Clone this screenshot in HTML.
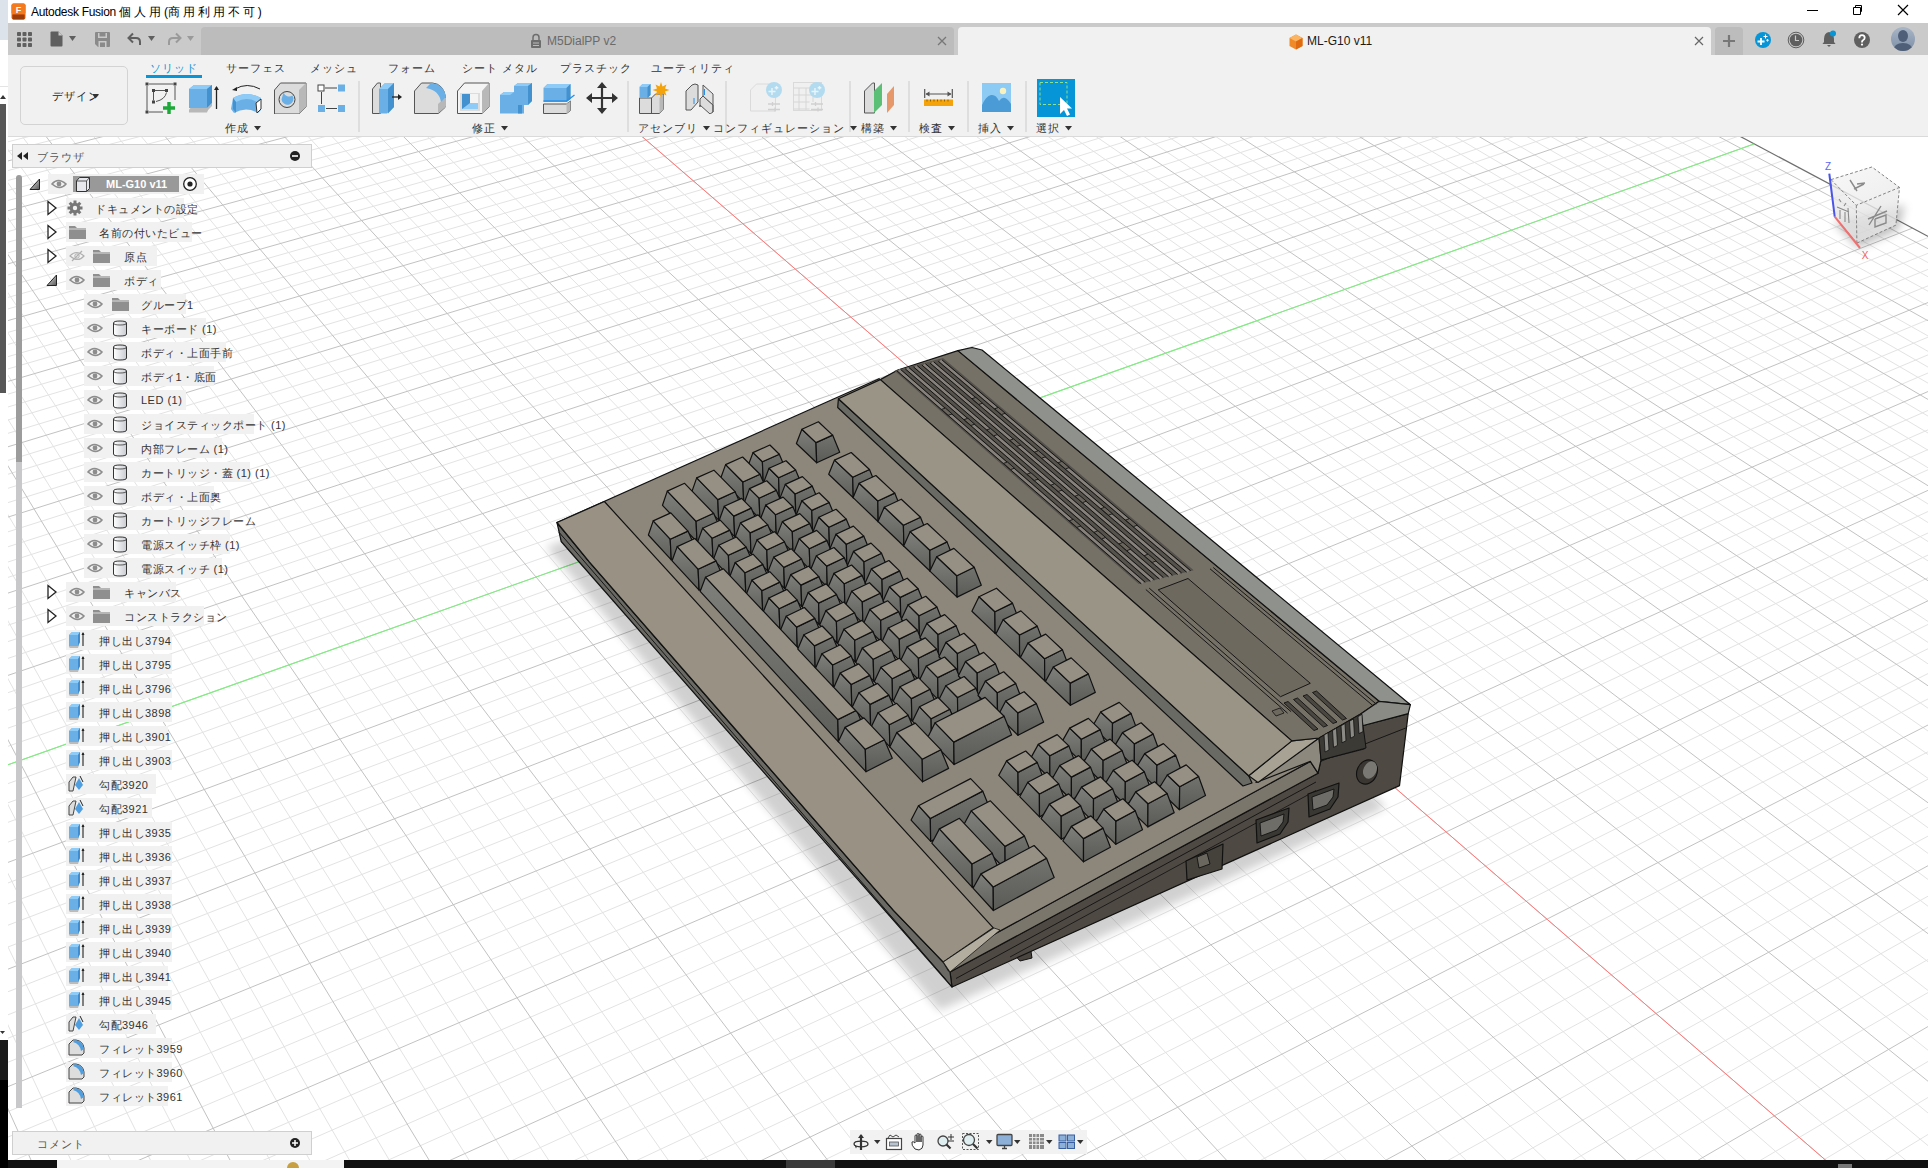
<!DOCTYPE html>
<html><head><meta charset="utf-8"><style>
html,body{margin:0;padding:0;width:1928px;height:1168px;overflow:hidden;background:#fff;position:relative}
</style></head><body>
<div style="position:absolute;left:8px;top:137px;width:1920px;height:1023px;background:#fff;overflow:hidden"><svg style="position:absolute;left:-8px;top:-137px" width="1928" height="1168" viewBox="0 0 1928 1168"><path d="M-1993.3 7708.7L3775.9 1219.5M-1966.8 7435.3L3732.6 1196.4M-1941.9 7178.0L3690.1 1173.8M-1918.4 6935.2L3648.4 1151.6M-1875.1 6488.8L3567.0 1108.3M-1855.2 6283.1L3527.3 1087.2M-1836.3 6087.8L3488.4 1066.5M-1818.3 5902.3L3450.0 1046.1M-1784.9 5557.6L3375.2 1006.3M-1769.4 5397.1L3338.8 986.9M-1754.6 5244.0L3302.9 967.8M-1740.4 5097.6L3267.6 949.0M-1713.8 4823.4L3198.6 912.3M-1701.4 4694.8L3164.9 894.4M-1689.4 4571.5L3131.8 876.8M-1677.9 4453.0L3099.1 859.4M-1656.3 4229.7L3035.3 825.5M-1646.1 4124.4L3004.1 808.9M-1636.3 4022.9L2973.4 792.5M-1626.8 3925.1L2943.1 776.4M-1608.9 3739.7L2883.9 744.9M-1600.3 3651.8L2855.0 729.5M-1592.1 3566.9L2826.4 714.4M-1584.2 3484.8L2798.3 699.4M-1569.0 3328.4L2743.2 670.1M-1561.8 3254.0L2716.3 655.7M-1554.8 3181.9L2689.7 641.6M-1548.0 3111.9L2663.5 627.6M-1535.1 2978.3L2612.1 600.3M-1528.9 2914.4L2586.9 586.9M-1522.9 2852.4L2562.1 573.7M-1517.1 2792.2L2537.6 560.7M-1505.9 2676.6L2489.6 535.1M-1500.5 2621.2L2466.0 522.6M-1495.3 2567.3L2442.8 510.3M-1490.2 2514.9L2419.9 498.1M-1480.4 2414.0L2374.9 474.1M-1475.7 2365.5L2352.8 462.4M-1471.2 2318.2L2331.0 450.8M-1466.7 2272.1L2309.5 439.3M-1458.1 2183.3L2267.3 416.9M-1454.0 2140.5L2246.5 405.8M-1449.9 2098.7L2226.0 394.9M-1445.9 2057.9L2205.8 384.2M-1438.3 1979.0L2166.1 363.0M-1434.6 1941.0L2146.6 352.6M-1431.0 1903.7L2127.3 342.4M-1427.5 1867.3L2108.2 332.2M-1420.7 1796.9L2070.8 312.3M-1417.4 1762.8L2052.4 302.5M-1414.1 1729.5L2034.2 292.9M-1411.0 1696.8L2016.2 283.3M-1404.8 1633.5L1980.8 264.5M-1401.9 1602.8L1963.5 255.2M-1399.0 1572.8L1946.3 246.1M-1396.1 1543.3L1929.3 237.1M-1390.6 1486.1L1895.9 219.3M-1387.9 1458.3L1879.4 210.5M-1385.2 1431.1L1863.2 201.9M-1382.6 1404.4L1847.1 193.3M-1377.6 1352.4L1815.4 176.5M-1375.2 1327.2L1799.9 168.2M-1372.8 1302.4L1784.5 160.0M-1370.4 1278.0L1769.2 151.9M-1365.8 1230.7L1739.2 135.9M-1363.6 1207.6L1724.4 128.1M-1361.4 1184.9L1709.8 120.3M-1359.2 1162.7L1695.3 112.6M-1355.0 1119.3L1666.8 97.4M-1353.0 1098.1L1652.8 89.9M-1351.0 1077.3L1638.9 82.6M-1349.0 1056.9L1625.1 75.2M-1345.1 1017.0L1598.0 60.8M-1343.2 997.6L1584.7 53.7M-1341.4 978.4L1571.4 46.7M-1339.6 959.6L1558.4 39.7M-1336.0 922.8L1532.5 26.0M-1334.3 904.8L1519.8 19.2M-1332.5 887.1L1507.2 12.5M-1330.9 869.7L1494.8 5.9M-1327.6 835.7L1470.2 -7.2M-1326.0 819.0L1458.0 -13.7M-1324.4 802.6L1446.0 -20.0M-1322.8 786.5L1434.1 -26.4M-1319.7 754.9L1410.7 -38.9M-1318.2 739.5L1399.1 -45.0M-1316.8 724.2L1387.6 -51.1M-1315.3 709.2L1376.2 -57.2M-1312.5 679.8L1353.8 -69.1M-1311.1 665.4L1342.8 -75.0M-1309.7 651.2L1331.8 -80.8M-1308.3 637.3L1320.9 -86.6M-1305.7 609.8L1299.5 -98.0M-1304.4 596.4L1288.9 -103.6M-1303.1 583.2L1278.4 -109.2M-1301.8 570.1L1268.0 -114.7M-1299.4 544.4L1247.5 -125.7M-1298.1 531.9L1237.4 -131.0M-1296.9 519.5L1227.3 -136.4M-1295.8 507.2L1217.4 -141.7M-1293.4 483.2L1197.7 -152.1M-1292.3 471.4L1188.0 -157.3M-1291.2 459.8L1178.4 -162.4M-1290.0 448.3L1168.8 -167.5M-1287.9 425.8L1150.0 -177.5M-1286.8 414.7L1140.7 -182.5M-1285.7 403.8L1131.4 -187.4M-1284.7 393.0L1122.3 -192.3M-1282.6 371.7L1104.2 -201.9M-1281.6 361.3L1095.3 -206.7M-1280.6 351.0L1086.4 -211.4M-1279.6 340.8L1077.6 -216.1M-1277.7 320.9L1060.2 -225.3M-1276.7 311.0L1051.6 -229.9M-1275.8 301.3L1043.1 -234.4M-1274.9 291.7L1034.6 -238.9M-1273.0 272.8L1017.9 -247.8M-1272.1 263.6L1009.7 -252.2M-1271.3 254.4L1001.5 -256.5M-1270.4 245.3L993.4 -260.9M-1268.6 227.5L977.3 -269.4M-1267.8 218.7L969.3 -273.7M-1267.0 210.0L961.4 -277.8M-1266.1 201.4L953.6 -282.0M-1264.5 184.5L938.1 -290.2M-1263.7 176.2L930.5 -294.3M-1262.9 167.9L922.9 -298.4M-1262.1 159.8L915.4 -302.4M-1859.9 7812.7L-1237.0 146.6M-1704.7 7633.1L-1212.8 141.5M-1555.4 7460.4L-1188.8 136.4M-1411.7 7294.2L-1164.9 131.4M-1139.9 6979.8L-1117.7 121.4M-1011.2 6830.9L-1094.3 116.5M-887.0 6687.3L-1071.0 111.6M-767.1 6548.6L-1047.9 106.7M-539.2 6284.9L-1002.2 97.0M-430.8 6159.6L-979.5 92.2M-325.9 6038.2L-957.0 87.5M-224.3 5920.7L-934.7 82.8M-30.4 5696.5L-890.3 73.4M62.2 5589.4L-868.4 68.8M152.0 5485.5L-846.6 64.2M239.1 5384.7L-824.9 59.6M406.0 5191.6L-781.9 50.5M486.0 5099.2L-760.7 46.0M563.7 5009.3L-739.5 41.6M639.3 4921.8L-718.5 37.1M784.5 4753.8L-676.9 28.3M854.3 4673.2L-656.2 24.0M922.2 4594.6L-635.7 19.6M988.4 4518.0L-615.3 15.3M1115.9 4370.5L-574.9 6.8M1177.3 4299.5L-554.9 2.6M1237.2 4230.2L-535.0 -1.6M1295.7 4162.6L-515.2 -5.8M1408.5 4032.1L-476.0 -14.1M1462.9 3969.2L-456.6 -18.2M1516.1 3907.6L-437.3 -22.3M1568.1 3847.5L-418.1 -26.3M1668.6 3731.2L-380.0 -34.4M1717.3 3675.0L-361.1 -38.4M1764.8 3620.0L-342.4 -42.3M1811.4 3566.1L-323.7 -46.3M1901.5 3461.8L-286.7 -54.1M1945.2 3411.3L-268.4 -57.9M1988.0 3361.8L-250.2 -61.8M2029.9 3313.4L-232.0 -65.6M2111.2 3219.3L-196.1 -73.2M2150.6 3173.7L-178.3 -77.0M2189.3 3129.0L-160.6 -80.7M2227.2 3085.1L-142.9 -84.4M2300.9 2999.8L-108.0 -91.8M2336.8 2958.4L-90.7 -95.5M2371.9 2917.8L-73.5 -99.1M2406.4 2877.9L-56.3 -102.7M2473.5 2800.2L-22.3 -109.9M2506.2 2762.5L-5.5 -113.5M2538.2 2725.4L11.3 -117.0M2569.7 2688.9L27.9 -120.5M2631.1 2617.9L61.0 -127.5M2661.0 2583.4L77.4 -131.0M2690.4 2549.4L93.7 -134.4M2719.3 2516.0L109.9 -137.8M2775.6 2450.8L142.1 -144.6M2803.1 2419.0L158.0 -148.0M2830.1 2387.8L173.9 -151.4M2856.7 2357.0L189.7 -154.7M2908.6 2297.0L221.0 -161.3M2933.9 2267.7L236.6 -164.6M2958.9 2238.8L252.0 -167.9M2983.4 2210.5L267.4 -171.1M3031.4 2155.0L297.9 -177.5M3054.8 2127.9L313.1 -180.7M3077.9 2101.2L328.1 -183.9M3100.6 2074.9L343.1 -187.1M3145.1 2023.5L372.8 -193.4M3166.8 1998.3L387.6 -196.5M3188.2 1973.5L402.3 -199.6M3209.3 1949.1L416.9 -202.7M3250.7 1901.3L445.8 -208.8M3270.9 1877.9L460.2 -211.8M3290.8 1854.9L474.5 -214.8M3310.5 1832.1L488.8 -217.8M3349.0 1787.6L517.0 -223.8M3367.8 1765.8L531.0 -226.8M3386.5 1744.2L545.0 -229.7M3404.8 1723.0L558.9 -232.6M3440.8 1681.4L586.4 -238.5M3458.4 1661.0L600.1 -241.4M3475.8 1640.9L613.7 -244.2M3493.0 1621.0L627.2 -247.1M3526.7 1582.1L654.1 -252.8M3543.2 1563.0L667.5 -255.6M3559.5 1544.1L680.7 -258.4M3575.6 1525.5L693.9 -261.2M3607.2 1488.9L720.2 -266.7M3622.7 1471.0L733.2 -269.5M3638.0 1453.3L746.1 -272.2M3653.1 1435.8L759.0 -274.9M3682.8 1401.4L784.7 -280.3M3697.4 1384.5L797.4 -283.0M3711.8 1367.9L810.0 -285.7M3726.1 1351.4L822.6 -288.3M3754.1 1319.0L847.6 -293.6M3767.8 1303.1L860.0 -296.2M3781.4 1287.4L872.4 -298.9M3794.8 1271.9L884.7 -301.5" stroke="#e3e3e3" stroke-width="1" fill="none"/>
<path d="M-2021.5 7999.5L3819.9 1242.9M-1896.2 6705.8L3607.3 1129.8M-1801.2 5725.7L3412.3 1026.0M-1726.8 4957.5L3232.8 930.5M-1666.9 4339.2L3067.0 842.3M-1617.7 3830.8L2913.3 760.6M-1576.5 3405.3L2770.6 684.6M-1541.5 3044.1L2637.6 613.9M-1511.4 2733.6L2513.4 547.8M-1485.3 2463.8L2397.2 486.0M-1462.3 2227.2L2288.2 428.0M-1442.1 2018.0L2185.8 373.5M-1424.0 1831.7L2089.4 322.2M-1407.9 1664.8L1998.4 273.8M-1393.3 1514.4L1912.5 228.1M-1380.1 1378.2L1831.2 184.9M-1368.1 1254.1L1754.1 143.9M-1357.1 1140.8L1681.0 105.0M-1347.0 1036.8L1611.5 68.0M-1337.8 941.0L1545.4 32.8M-1329.2 852.6L1482.4 -0.7M-1321.3 770.6L1422.3 -32.7M-1313.9 694.4L1365.0 -63.2M-1307.0 623.5L1310.2 -92.3M-1300.6 557.2L1257.7 -120.2M-1294.6 495.2L1207.5 -146.9M-1288.9 437.0L1159.4 -172.5M-1283.6 382.3L1113.2 -197.1M-1278.7 330.8L1068.9 -220.7M-1274.0 282.2L1026.3 -243.4M-1269.5 236.3L985.3 -265.2M-1265.3 192.9L945.9 -286.1M-1261.3 151.7L907.9 -306.4M-2021.5 7999.5L-1261.3 151.7M-1273.3 7134.1L-1141.2 126.4M-651.2 6414.5L-1025.0 101.8M-125.8 5806.8L-912.4 78.1M323.8 5286.8L-803.4 55.0M712.9 4836.7L-697.6 32.7M1053.0 4443.3L-595.1 11.0M1352.7 4096.6L-495.6 -10.0M1618.9 3788.7L-399.0 -30.4M1856.9 3513.4L-305.2 -50.2M2070.9 3265.9L-214.0 -69.4M2264.4 3042.0L-125.4 -88.1M2440.3 2838.7L-39.3 -106.3M2600.7 2653.1L44.5 -124.0M2747.7 2483.1L126.0 -141.2M2882.8 2326.8L205.4 -158.0M3007.6 2182.5L282.7 -174.3M3123.0 2049.0L358.0 -190.2M3230.1 1925.0L431.4 -205.7M3329.9 1809.7L502.9 -220.8M3422.9 1702.1L572.7 -235.6M3509.9 1601.4L640.7 -249.9M3591.5 1507.1L707.1 -263.9M3668.1 1418.5L771.9 -277.6M3740.2 1335.1L835.1 -291.0M3808.1 1256.5L896.9 -304.0" stroke="#c2c2c2" stroke-width="1" fill="none"/>
<path d="M3819.9 1242.9L907.9 -306.4" stroke="#6e6e6e" stroke-width="1.2" fill="none"/>
<path d="M3007.6 2182.5L282.7 -174.3" stroke="#ff7a7a" stroke-width="1" fill="none"/>
<path d="M-1368.1 1254.1L1754.1 143.9" stroke="#7cf07c" stroke-width="1.1" fill="none"/>
<defs><filter id="kbshadow" x="-20%" y="-20%" width="140%" height="140%"><feGaussianBlur stdDeviation="5"/></filter><linearGradient id="gkf" x1="0" y1="0" x2="0" y2="1"><stop offset="0" stop-color="#7f807c"/><stop offset="1" stop-color="#5e5f5b"/></linearGradient><linearGradient id="gkr" x1="0" y1="0" x2="0" y2="1"><stop offset="0" stop-color="#72736f"/><stop offset="1" stop-color="#5a5b57"/></linearGradient></defs>
<polygon points="546.2,546.8 939.6,1010.6 1385.7,807.2 961.6,404.9" fill="#000" opacity="0.18" filter="url(#kbshadow)"/>
<polygon points="1012.0,952.0 1030.0,945.0 1032.0,958.0 1020.0,961.0" fill="#4a463f" stroke="#111" stroke-width="1" stroke-linejoin="round"/>
<polygon points="952.0,987.0 950.0,972.0 1318.0,773.2 1321.0,760.0 1364.0,749.0 1361.4,726.0 1408.2,713.6 1399.5,785.6" fill="#4e4a43" stroke="#111" stroke-width="1.2" stroke-linejoin="round"/>
<line x1="956.0" y1="978.5" x2="1316.0" y2="782.0" stroke="#161616" stroke-width="1.0"/>
<line x1="1010.0" y1="957.0" x2="1316.0" y2="790.5" stroke="#161616" stroke-width="0.9"/>
<line x1="1319.0" y1="762.0" x2="1405.8" y2="728.0" stroke="#161616" stroke-width="1.0"/>
<polygon points="943.3,962.0 1310.3,761.4 1318.0,773.2 950.0,972.0" fill="#7b766c" stroke="#111" stroke-width="1.2" stroke-linejoin="round"/>
<ellipse cx="1367" cy="772" rx="10" ry="12.5" transform="rotate(25 1367 772)" fill="#3a3732" stroke="#111" stroke-width="1.1"/>
<ellipse cx="1370" cy="770" rx="6.5" ry="9" transform="rotate(25 1370 770)" fill="#7a7872"/>
<polygon points="1308.0,794.0 1339.0,783.0 1338.0,797.0 1330.0,809.0 1309.0,817.0" fill="#3a3833" stroke="#111" stroke-width="1.2" stroke-linejoin="round"/>
<polygon points="1312.0,797.0 1334.0,789.0 1333.0,797.0 1327.0,805.0 1313.0,810.0" fill="#6f6d67" stroke="#111" stroke-width="0.9" stroke-linejoin="round"/>
<polygon points="1256.0,820.0 1289.0,808.0 1288.0,822.0 1280.0,834.0 1257.0,843.0" fill="#3a3833" stroke="#111" stroke-width="1.2" stroke-linejoin="round"/>
<polygon points="1260.0,823.0 1284.0,814.0 1283.0,822.0 1277.0,830.0 1261.0,836.0" fill="#6f6d67" stroke="#111" stroke-width="0.9" stroke-linejoin="round"/>
<polygon points="1186.0,861.0 1223.0,844.0 1222.0,869.0 1187.0,880.0" fill="#45423c" stroke="#111" stroke-width="1.2" stroke-linejoin="round"/>
<polygon points="1197.0,857.0 1207.0,853.0 1210.0,864.0 1199.0,868.0" fill="#6a675f" stroke="#111" stroke-width="0.9" stroke-linejoin="round"/>
<polygon points="561.2,541.5 952.0,987.0 950.0,972.0 948.0,970.0 943.3,962.1 893.5,910.3 589.1,561.7 557.0,522.5" fill="#6a6963" stroke="#111" stroke-width="1.2" stroke-linejoin="round"/>
<line x1="558.9" y1="532.1" x2="945.9" y2="979.5" stroke="#161616" stroke-width="1.0"/>
<polygon points="557.0,522.5 589.1,561.7 893.5,910.3 943.3,962.1 1311.5,760.8 879.0,378.7" fill="#8c867b" stroke="#111" stroke-width="1.2" stroke-linejoin="round"/>
<polygon points="557.0,522.5 589.1,561.7 893.5,910.3 943.3,962.1 993.3,927.8 604.4,501.5" fill="#989184" stroke="#111" stroke-width="1.2" stroke-linejoin="round"/>
<polygon points="943.3,962.0 994.0,928.0 1000.0,930.0 950.0,972.0" fill="#b3ad9f" stroke="#161616" stroke-width="0.8" stroke-linejoin="round"/>
<polygon points="1256.0,782.5 1319.0,738.0 1321.0,760.0 1318.0,773.2 1310.3,761.4" fill="#8d887d" stroke="#111" stroke-width="1.2" stroke-linejoin="round"/>
<polygon points="837.7,407.5 838.4,398.8 1248.7,775.8 1252.0,783.0 1243.0,786.0" fill="#6a6a65" stroke="#111" stroke-width="1.2" stroke-linejoin="round"/>
<polygon points="1248.7,775.8 1291.8,740.9 1319.0,738.0 1258.0,782.5" fill="#a8a294" stroke="#111" stroke-width="1.2" stroke-linejoin="round"/>
<polygon points="880.3,379.6 897.8,370.0 957.9,350.6 1379.2,701.3 1361.4,713.6 1319.0,738.0 1291.8,740.9" fill="#767166" stroke="#111" stroke-width="1.2" stroke-linejoin="round"/>
<polygon points="838.4,398.8 880.3,379.6 1291.8,740.9 1248.7,775.8" fill="#9a9487" stroke="#111" stroke-width="1.2" stroke-linejoin="round"/>
<polygon points="957.9,350.6 972.0,347.5 982.0,350.0 1410.4,704.7 1379.2,701.3" fill="#8f928c" stroke="#111" stroke-width="1.2" stroke-linejoin="round"/>
<polygon points="1379.2,701.3 1410.4,704.7 1408.2,713.6 1361.4,726.0 1361.4,713.6" fill="#8a8b85" stroke="#111" stroke-width="1.2" stroke-linejoin="round"/>
<polygon points="1319.0,738.0 1361.4,713.6 1366.0,748.0 1321.0,760.0" fill="#3c3a35" stroke="#111" stroke-width="1.0" stroke-linejoin="round"/>
<polygon points="1324.0,735.0 1328.0,732.7 1329.0,750.0 1325.0,752.0" fill="#8b8a84" stroke="#111" stroke-width="0.8" stroke-linejoin="round"/>
<polygon points="1332.5,730.4 1336.5,728.1 1337.5,745.4 1333.5,747.4" fill="#8b8a84" stroke="#111" stroke-width="0.8" stroke-linejoin="round"/>
<polygon points="1341.0,725.8 1345.0,723.5 1346.0,740.8 1342.0,742.8" fill="#8b8a84" stroke="#111" stroke-width="0.8" stroke-linejoin="round"/>
<polygon points="1349.5,721.2 1353.5,718.9 1354.5,736.2 1350.5,738.2" fill="#8b8a84" stroke="#111" stroke-width="0.8" stroke-linejoin="round"/>
<polygon points="1358.0,716.6 1362.0,714.3 1363.0,731.6 1359.0,733.6" fill="#8b8a84" stroke="#111" stroke-width="0.8" stroke-linejoin="round"/>
<polygon points="894.5,370.8 1138.8,584.1 1193.7,570.2 943.0,358.1" fill="#55524c"/>
<line x1="898.8" y1="370.1" x2="1143.2" y2="583.0" stroke="#86817a" stroke-width="2.6"/>
<line x1="896.9" y1="370.8" x2="1141.2" y2="583.8" stroke="#141414" stroke-width="1.0"/>
<line x1="900.7" y1="369.5" x2="1145.2" y2="582.2" stroke="#141414" stroke-width="1.0"/>
<line x1="907.1" y1="368.2" x2="1152.3" y2="580.6" stroke="#86817a" stroke-width="2.6"/>
<line x1="905.2" y1="368.8" x2="1150.3" y2="581.4" stroke="#141414" stroke-width="1.0"/>
<line x1="909.0" y1="367.6" x2="1154.4" y2="579.8" stroke="#141414" stroke-width="1.0"/>
<line x1="915.4" y1="366.3" x2="1161.4" y2="578.3" stroke="#86817a" stroke-width="2.6"/>
<line x1="913.5" y1="366.9" x2="1159.4" y2="579.1" stroke="#141414" stroke-width="1.0"/>
<line x1="917.3" y1="365.7" x2="1163.4" y2="577.5" stroke="#141414" stroke-width="1.0"/>
<line x1="923.7" y1="364.4" x2="1170.5" y2="576.0" stroke="#86817a" stroke-width="2.6"/>
<line x1="921.8" y1="365.0" x2="1168.5" y2="576.8" stroke="#141414" stroke-width="1.0"/>
<line x1="925.5" y1="363.8" x2="1172.5" y2="575.2" stroke="#141414" stroke-width="1.0"/>
<line x1="931.9" y1="362.5" x2="1179.6" y2="573.7" stroke="#86817a" stroke-width="2.6"/>
<line x1="930.1" y1="363.2" x2="1177.6" y2="574.5" stroke="#141414" stroke-width="1.0"/>
<line x1="933.8" y1="361.9" x2="1181.6" y2="572.9" stroke="#141414" stroke-width="1.0"/>
<line x1="940.2" y1="360.6" x2="1188.6" y2="571.4" stroke="#86817a" stroke-width="2.6"/>
<line x1="938.3" y1="361.3" x2="1186.6" y2="572.2" stroke="#141414" stroke-width="1.0"/>
<line x1="942.1" y1="360.0" x2="1190.6" y2="570.6" stroke="#141414" stroke-width="1.0"/>
<polygon points="941.5,409.4 948.2,415.3 952.1,413.9 945.4,408.1" fill="#6a665e" stroke="#161616" stroke-width="0.9" stroke-linejoin="round"/>
<polygon points="1003.5,463.4 1010.6,469.6 1014.5,468.2 1007.4,462.0" fill="#6a665e" stroke="#161616" stroke-width="0.9" stroke-linejoin="round"/>
<polygon points="1069.3,520.8 1076.9,527.4 1080.8,525.9 1073.3,519.3" fill="#6a665e" stroke="#161616" stroke-width="0.9" stroke-linejoin="round"/>
<polygon points="964.0,419.6 970.9,425.5 974.7,424.2 967.9,418.3" fill="#6a665e" stroke="#161616" stroke-width="0.9" stroke-linejoin="round"/>
<polygon points="1027.0,474.2 1034.3,480.5 1038.2,479.1 1030.9,472.8" fill="#6a665e" stroke="#161616" stroke-width="0.9" stroke-linejoin="round"/>
<polygon points="1094.0,532.3 1101.7,539.0 1105.6,537.4 1097.9,530.8" fill="#6a665e" stroke="#161616" stroke-width="0.9" stroke-linejoin="round"/>
<polygon points="986.8,429.9 993.7,435.9 997.6,434.5 990.6,428.5" fill="#6a665e" stroke="#161616" stroke-width="0.9" stroke-linejoin="round"/>
<polygon points="1050.8,485.2 1058.2,491.5 1062.1,490.1 1054.8,483.7" fill="#6a665e" stroke="#161616" stroke-width="0.9" stroke-linejoin="round"/>
<polygon points="1118.9,543.9 1126.8,550.7 1130.8,549.1 1122.9,542.4" fill="#6a665e" stroke="#161616" stroke-width="0.9" stroke-linejoin="round"/>
<polygon points="1009.8,440.3 1016.8,446.4 1020.7,445.0 1013.6,438.9" fill="#6a665e" stroke="#161616" stroke-width="0.9" stroke-linejoin="round"/>
<polygon points="1075.0,496.2 1082.4,502.7 1086.4,501.2 1078.9,494.8" fill="#6a665e" stroke="#161616" stroke-width="0.9" stroke-linejoin="round"/>
<polygon points="1144.2,555.7 1152.2,562.5 1156.2,560.9 1148.2,554.1" fill="#6a665e" stroke="#161616" stroke-width="0.9" stroke-linejoin="round"/>
<polygon points="972.0,398.7 978.8,404.5 982.6,403.2 975.8,397.4" fill="#6a665e" stroke="#161616" stroke-width="0.9" stroke-linejoin="round"/>
<polygon points="1034.5,452.1 1041.7,458.2 1045.5,456.8 1038.4,450.7" fill="#6a665e" stroke="#161616" stroke-width="0.9" stroke-linejoin="round"/>
<polygon points="1100.9,508.7 1108.5,515.2 1112.4,513.7 1104.8,507.2" fill="#6a665e" stroke="#161616" stroke-width="0.9" stroke-linejoin="round"/>
<polygon points="994.6,408.8 1001.4,414.6 1005.2,413.3 998.4,407.4" fill="#6a665e" stroke="#161616" stroke-width="0.9" stroke-linejoin="round"/>
<polygon points="1058.1,462.8 1065.4,469.0 1069.3,467.5 1061.9,461.3" fill="#6a665e" stroke="#161616" stroke-width="0.9" stroke-linejoin="round"/>
<polygon points="1125.6,520.1 1133.3,526.7 1137.3,525.1 1129.5,518.6" fill="#6a665e" stroke="#161616" stroke-width="0.9" stroke-linejoin="round"/>
<line x1="1145.8" y1="589.5" x2="1287.6" y2="713.2" stroke="#161616" stroke-width="1.0"/>
<line x1="1149.2" y1="588.1" x2="1291.1" y2="711.7" stroke="#161616" stroke-width="1.0"/>
<line x1="1210.0" y1="568.8" x2="1372.9" y2="705.6" stroke="#161616" stroke-width="1.0"/>
<line x1="1213.2" y1="567.5" x2="1376.3" y2="704.1" stroke="#161616" stroke-width="1.0"/>
<polygon points="1158.2,589.8 1188.0,578.5 1310.3,683.3 1280.5,696.7" fill="#6e695f" stroke="#161616" stroke-width="1.0" stroke-linejoin="round"/>
<polygon points="1284.0,703.0 1288.0,701.5 1318.0,729.0 1314.0,730.5" fill="#4a4741" stroke="#111" stroke-width="0.9" stroke-linejoin="round"/>
<polygon points="1293.5,699.5 1297.5,698.0 1327.5,725.5 1323.5,727.0" fill="#4a4741" stroke="#111" stroke-width="0.9" stroke-linejoin="round"/>
<polygon points="1303.0,696.0 1307.0,694.5 1337.0,722.0 1333.0,723.5" fill="#4a4741" stroke="#111" stroke-width="0.9" stroke-linejoin="round"/>
<polygon points="1312.5,692.5 1316.5,691.0 1346.5,718.5 1342.5,720.0" fill="#4a4741" stroke="#111" stroke-width="0.9" stroke-linejoin="round"/>
<polygon points="1272.0,711.0 1280.0,708.0 1284.0,713.0 1276.0,716.0" fill="#6e695f" stroke="#111" stroke-width="0.8" stroke-linejoin="round"/>
<polygon points="796.4,443.5 816.7,462.8 816.0,442.6 801.9,429.3" fill="url(#gkf)" stroke="#111" stroke-width="1.2" stroke-linejoin="round"/><polygon points="816.7,462.8 839.7,452.3 832.6,435.1 816.0,442.6" fill="url(#gkr)" stroke="#111" stroke-width="1.2" stroke-linejoin="round"/><polygon points="801.9,429.3 816.0,442.6 832.6,435.1 818.4,421.8" fill="#958f84" stroke="#111" stroke-width="1.2" stroke-linejoin="round"/>
<polygon points="747.7,466.8 763.2,482.1 762.4,461.8 753.0,452.6" fill="url(#gkf)" stroke="#111" stroke-width="1.2" stroke-linejoin="round"/><polygon points="763.2,482.1 786.6,471.4 779.3,454.2 762.4,461.8" fill="url(#gkr)" stroke="#111" stroke-width="1.2" stroke-linejoin="round"/><polygon points="753.0,452.6 762.4,461.8 779.3,454.2 769.9,445.0" fill="#958f84" stroke="#111" stroke-width="1.2" stroke-linejoin="round"/>
<polygon points="720.5,478.8 743.7,502.4 742.9,482.0 725.6,464.6" fill="url(#gkf)" stroke="#111" stroke-width="1.2" stroke-linejoin="round"/><polygon points="743.7,502.4 767.5,491.6 760.0,474.2 742.9,482.0" fill="url(#gkr)" stroke="#111" stroke-width="1.2" stroke-linejoin="round"/><polygon points="725.6,464.6 742.9,482.0 760.0,474.2 742.6,457.0" fill="#958f84" stroke="#111" stroke-width="1.2" stroke-linejoin="round"/>
<polygon points="763.6,482.6 779.3,498.2 778.6,477.8 769.0,468.3" fill="url(#gkf)" stroke="#111" stroke-width="1.2" stroke-linejoin="round"/><polygon points="779.3,498.2 802.9,487.3 795.6,470.0 778.6,477.8" fill="url(#gkr)" stroke="#111" stroke-width="1.2" stroke-linejoin="round"/><polygon points="769.0,468.3 778.6,477.8 795.6,470.0 786.0,460.7" fill="#958f84" stroke="#111" stroke-width="1.2" stroke-linejoin="round"/>
<polygon points="691.7,492.1 718.7,520.1 717.8,499.6 696.7,477.9" fill="url(#gkf)" stroke="#111" stroke-width="1.2" stroke-linejoin="round"/><polygon points="718.7,520.1 742.7,509.1 735.1,491.7 717.8,499.6" fill="url(#gkr)" stroke="#111" stroke-width="1.2" stroke-linejoin="round"/><polygon points="696.7,477.9 717.8,499.6 735.1,491.7 713.9,470.2" fill="#958f84" stroke="#111" stroke-width="1.2" stroke-linejoin="round"/>
<polygon points="828.7,474.3 853.3,497.8 852.7,477.3 834.5,460.1" fill="url(#gkf)" stroke="#111" stroke-width="1.2" stroke-linejoin="round"/><polygon points="853.3,497.8 876.6,487.0 869.5,469.5 852.7,477.3" fill="url(#gkr)" stroke="#111" stroke-width="1.2" stroke-linejoin="round"/><polygon points="834.5,460.1 852.7,477.3 869.5,469.5 851.2,452.5" fill="#958f84" stroke="#111" stroke-width="1.2" stroke-linejoin="round"/>
<polygon points="662.5,505.3 697.0,542.0 696.1,521.3 667.3,491.1" fill="url(#gkf)" stroke="#111" stroke-width="1.2" stroke-linejoin="round"/><polygon points="697.0,542.0 721.3,530.8 713.6,513.3 696.1,521.3" fill="url(#gkr)" stroke="#111" stroke-width="1.2" stroke-linejoin="round"/><polygon points="667.3,491.1 696.1,521.3 713.6,513.3 684.6,483.3" fill="#958f84" stroke="#111" stroke-width="1.2" stroke-linejoin="round"/>
<polygon points="744.2,502.9 759.9,518.8 759.1,498.2 749.5,488.6" fill="url(#gkf)" stroke="#111" stroke-width="1.2" stroke-linejoin="round"/><polygon points="759.9,518.8 783.8,507.8 776.3,490.3 759.1,498.2" fill="url(#gkr)" stroke="#111" stroke-width="1.2" stroke-linejoin="round"/><polygon points="749.5,488.6 759.1,498.2 776.3,490.3 766.7,480.8" fill="#958f84" stroke="#111" stroke-width="1.2" stroke-linejoin="round"/>
<polygon points="779.8,498.6 795.8,514.5 795.1,494.0 785.3,484.4" fill="url(#gkf)" stroke="#111" stroke-width="1.2" stroke-linejoin="round"/><polygon points="795.8,514.5 819.5,503.5 812.2,486.1 795.1,494.0" fill="url(#gkr)" stroke="#111" stroke-width="1.2" stroke-linejoin="round"/><polygon points="785.3,484.4 795.1,494.0 812.2,486.1 802.4,476.6" fill="#958f84" stroke="#111" stroke-width="1.2" stroke-linejoin="round"/>
<polygon points="719.1,520.5 734.7,536.7 733.8,516.1 724.3,506.3" fill="url(#gkf)" stroke="#111" stroke-width="1.2" stroke-linejoin="round"/><polygon points="734.7,536.7 758.8,525.6 751.2,508.1 733.8,516.1" fill="url(#gkr)" stroke="#111" stroke-width="1.2" stroke-linejoin="round"/><polygon points="724.3,506.3 733.8,516.1 751.2,508.1 741.7,498.4" fill="#958f84" stroke="#111" stroke-width="1.2" stroke-linejoin="round"/>
<polygon points="853.1,497.6 878.2,521.7 877.8,501.0 859.1,483.3" fill="url(#gkf)" stroke="#111" stroke-width="1.2" stroke-linejoin="round"/><polygon points="878.2,521.7 901.8,510.6 894.7,493.1 877.8,501.0" fill="url(#gkr)" stroke="#111" stroke-width="1.2" stroke-linejoin="round"/><polygon points="859.1,483.3 877.8,501.0 894.7,493.1 875.9,475.5" fill="#958f84" stroke="#111" stroke-width="1.2" stroke-linejoin="round"/>
<polygon points="648.4,535.0 671.3,559.9 670.2,539.2 653.2,520.9" fill="url(#gkf)" stroke="#111" stroke-width="1.2" stroke-linejoin="round"/><polygon points="671.3,559.9 695.8,548.6 687.9,531.1 670.2,539.2" fill="url(#gkr)" stroke="#111" stroke-width="1.2" stroke-linejoin="round"/><polygon points="653.2,520.9 670.2,539.2 687.9,531.1 670.8,512.9" fill="#958f84" stroke="#111" stroke-width="1.2" stroke-linejoin="round"/>
<polygon points="760.3,519.2 776.3,535.4 775.5,514.7 765.8,505.0" fill="url(#gkf)" stroke="#111" stroke-width="1.2" stroke-linejoin="round"/><polygon points="776.3,535.4 800.3,524.3 792.9,506.8 775.5,514.7" fill="url(#gkr)" stroke="#111" stroke-width="1.2" stroke-linejoin="round"/><polygon points="765.8,505.0 775.5,514.7 792.9,506.8 783.1,497.1" fill="#958f84" stroke="#111" stroke-width="1.2" stroke-linejoin="round"/>
<polygon points="796.2,515.0 812.5,531.1 811.8,510.4 801.9,500.7" fill="url(#gkf)" stroke="#111" stroke-width="1.2" stroke-linejoin="round"/><polygon points="812.5,531.1 836.4,520.0 829.1,502.5 811.8,510.4" fill="url(#gkr)" stroke="#111" stroke-width="1.2" stroke-linejoin="round"/><polygon points="801.9,500.7 811.8,510.4 829.1,502.5 819.1,492.8" fill="#958f84" stroke="#111" stroke-width="1.2" stroke-linejoin="round"/>
<polygon points="697.4,542.4 713.0,559.0 712.1,538.2 702.6,528.2" fill="url(#gkf)" stroke="#111" stroke-width="1.2" stroke-linejoin="round"/><polygon points="713.0,559.0 737.4,547.6 729.7,530.1 712.1,538.2" fill="url(#gkr)" stroke="#111" stroke-width="1.2" stroke-linejoin="round"/><polygon points="702.6,528.2 712.1,538.2 729.7,530.1 720.2,520.2" fill="#958f84" stroke="#111" stroke-width="1.2" stroke-linejoin="round"/>
<polygon points="735.1,537.2 751.0,553.7 750.2,532.9 740.5,522.9" fill="url(#gkf)" stroke="#111" stroke-width="1.2" stroke-linejoin="round"/><polygon points="751.0,553.7 775.3,542.3 767.7,524.8 750.2,532.9" fill="url(#gkr)" stroke="#111" stroke-width="1.2" stroke-linejoin="round"/><polygon points="740.5,522.9 750.2,532.9 767.7,524.8 758.0,514.9" fill="#958f84" stroke="#111" stroke-width="1.2" stroke-linejoin="round"/>
<polygon points="776.7,535.9 793.0,552.4 792.3,531.6 782.4,521.6" fill="url(#gkf)" stroke="#111" stroke-width="1.2" stroke-linejoin="round"/><polygon points="793.0,552.4 817.2,541.1 809.7,523.5 792.3,531.6" fill="url(#gkr)" stroke="#111" stroke-width="1.2" stroke-linejoin="round"/><polygon points="782.4,521.6 792.3,531.6 809.7,523.5 799.8,513.6" fill="#958f84" stroke="#111" stroke-width="1.2" stroke-linejoin="round"/>
<polygon points="813.0,531.6 829.5,548.1 828.9,527.2 818.8,517.3" fill="url(#gkf)" stroke="#111" stroke-width="1.2" stroke-linejoin="round"/><polygon points="829.5,548.1 853.6,536.7 846.2,519.1 828.9,527.2" fill="url(#gkr)" stroke="#111" stroke-width="1.2" stroke-linejoin="round"/><polygon points="818.8,517.3 828.9,527.2 846.2,519.1 836.1,509.3" fill="#958f84" stroke="#111" stroke-width="1.2" stroke-linejoin="round"/>
<polygon points="878.0,521.5 903.9,546.2 903.4,525.2 884.3,507.2" fill="url(#gkf)" stroke="#111" stroke-width="1.2" stroke-linejoin="round"/><polygon points="903.9,546.2 927.6,534.9 920.5,517.2 903.4,525.2" fill="url(#gkr)" stroke="#111" stroke-width="1.2" stroke-linejoin="round"/><polygon points="884.3,507.2 903.4,525.2 920.5,517.2 901.3,499.2" fill="#958f84" stroke="#111" stroke-width="1.2" stroke-linejoin="round"/>
<polygon points="713.4,559.4 729.3,576.3 728.4,555.3 718.7,545.2" fill="url(#gkf)" stroke="#111" stroke-width="1.2" stroke-linejoin="round"/><polygon points="729.3,576.3 753.9,564.8 746.1,547.1 728.4,555.3" fill="url(#gkr)" stroke="#111" stroke-width="1.2" stroke-linejoin="round"/><polygon points="718.7,545.2 728.4,555.3 746.1,547.1 736.4,537.0" fill="#958f84" stroke="#111" stroke-width="1.2" stroke-linejoin="round"/>
<polygon points="672.1,560.8 699.1,590.2 698.1,569.2 677.2,546.6" fill="url(#gkf)" stroke="#111" stroke-width="1.2" stroke-linejoin="round"/><polygon points="699.1,590.2 723.9,578.6 716.0,560.9 698.1,569.2" fill="url(#gkr)" stroke="#111" stroke-width="1.2" stroke-linejoin="round"/><polygon points="677.2,546.6 698.1,569.2 716.0,560.9 694.9,538.5" fill="#958f84" stroke="#111" stroke-width="1.2" stroke-linejoin="round"/>
<polygon points="751.4,554.1 767.6,570.9 766.8,550.0 757.0,539.9" fill="url(#gkf)" stroke="#111" stroke-width="1.2" stroke-linejoin="round"/><polygon points="767.6,570.9 792.0,559.4 784.4,541.7 766.8,550.0" fill="url(#gkr)" stroke="#111" stroke-width="1.2" stroke-linejoin="round"/><polygon points="757.0,539.9 766.8,550.0 784.4,541.7 774.5,531.7" fill="#958f84" stroke="#111" stroke-width="1.2" stroke-linejoin="round"/>
<polygon points="793.5,552.9 810.0,569.7 809.3,548.7 799.3,538.6" fill="url(#gkf)" stroke="#111" stroke-width="1.2" stroke-linejoin="round"/><polygon points="810.0,569.7 834.3,558.2 826.9,540.4 809.3,548.7" fill="url(#gkr)" stroke="#111" stroke-width="1.2" stroke-linejoin="round"/><polygon points="799.3,538.6 809.3,548.7 826.9,540.4 816.7,530.4" fill="#958f84" stroke="#111" stroke-width="1.2" stroke-linejoin="round"/>
<polygon points="830.0,548.5 846.9,565.3 846.3,544.3 836.0,534.2" fill="url(#gkf)" stroke="#111" stroke-width="1.2" stroke-linejoin="round"/><polygon points="846.9,565.3 871.1,553.8 863.7,536.1 846.3,544.3" fill="url(#gkr)" stroke="#111" stroke-width="1.2" stroke-linejoin="round"/><polygon points="836.0,534.2 846.3,544.3 863.7,536.1 853.4,526.1" fill="#958f84" stroke="#111" stroke-width="1.2" stroke-linejoin="round"/>
<polygon points="729.7,576.7 745.8,593.9 745.0,572.8 735.2,562.5" fill="url(#gkf)" stroke="#111" stroke-width="1.2" stroke-linejoin="round"/><polygon points="745.8,593.9 770.6,582.2 762.8,564.4 745.0,572.8" fill="url(#gkr)" stroke="#111" stroke-width="1.2" stroke-linejoin="round"/><polygon points="735.2,562.5 745.0,572.8 762.8,564.4 753.0,554.2" fill="#958f84" stroke="#111" stroke-width="1.2" stroke-linejoin="round"/>
<polygon points="768.1,571.4 784.5,588.4 783.8,567.4 773.7,557.1" fill="url(#gkf)" stroke="#111" stroke-width="1.2" stroke-linejoin="round"/><polygon points="784.5,588.4 809.1,576.8 801.5,559.0 783.8,567.4" fill="url(#gkr)" stroke="#111" stroke-width="1.2" stroke-linejoin="round"/><polygon points="773.7,557.1 783.8,567.4 801.5,559.0 791.4,548.8" fill="#958f84" stroke="#111" stroke-width="1.2" stroke-linejoin="round"/>
<polygon points="903.7,546.0 930.2,571.3 929.8,550.2 910.2,531.6" fill="url(#gkf)" stroke="#111" stroke-width="1.2" stroke-linejoin="round"/><polygon points="930.2,571.3 954.1,559.8 947.0,541.9 929.8,550.2" fill="url(#gkr)" stroke="#111" stroke-width="1.2" stroke-linejoin="round"/><polygon points="910.2,531.6 929.8,550.2 947.0,541.9 927.3,523.5" fill="#958f84" stroke="#111" stroke-width="1.2" stroke-linejoin="round"/>
<polygon points="810.5,570.1 827.3,587.2 826.7,566.1 816.4,555.8" fill="url(#gkf)" stroke="#111" stroke-width="1.2" stroke-linejoin="round"/><polygon points="827.3,587.2 851.8,575.5 844.3,557.7 826.7,566.1" fill="url(#gkr)" stroke="#111" stroke-width="1.2" stroke-linejoin="round"/><polygon points="816.4,555.8 826.7,566.1 844.3,557.7 834.0,547.5" fill="#958f84" stroke="#111" stroke-width="1.2" stroke-linejoin="round"/>
<polygon points="847.3,565.7 864.5,582.8 864.0,561.7 853.5,551.4" fill="url(#gkf)" stroke="#111" stroke-width="1.2" stroke-linejoin="round"/><polygon points="864.5,582.8 888.9,571.2 881.5,553.3 864.0,561.7" fill="url(#gkr)" stroke="#111" stroke-width="1.2" stroke-linejoin="round"/><polygon points="853.5,551.4 864.0,561.7 881.5,553.3 871.0,543.1" fill="#958f84" stroke="#111" stroke-width="1.2" stroke-linejoin="round"/>
<polygon points="746.3,594.3 762.7,611.8 761.9,590.6 751.9,580.1" fill="url(#gkf)" stroke="#111" stroke-width="1.2" stroke-linejoin="round"/><polygon points="762.7,611.8 787.6,599.9 779.8,582.1 761.9,590.6" fill="url(#gkr)" stroke="#111" stroke-width="1.2" stroke-linejoin="round"/><polygon points="751.9,580.1 761.9,590.6 779.8,582.1 769.8,571.7" fill="#958f84" stroke="#111" stroke-width="1.2" stroke-linejoin="round"/>
<polygon points="785.0,588.9 801.7,606.3 801.0,585.1 790.8,574.6" fill="url(#gkf)" stroke="#111" stroke-width="1.2" stroke-linejoin="round"/><polygon points="801.7,606.3 826.5,594.5 818.8,576.6 801.0,585.1" fill="url(#gkr)" stroke="#111" stroke-width="1.2" stroke-linejoin="round"/><polygon points="790.8,574.6 801.0,585.1 818.8,576.6 808.6,566.2" fill="#958f84" stroke="#111" stroke-width="1.2" stroke-linejoin="round"/>
<polygon points="827.8,587.7 844.9,605.1 844.3,583.8 833.9,573.4" fill="url(#gkf)" stroke="#111" stroke-width="1.2" stroke-linejoin="round"/><polygon points="844.9,605.1 869.6,593.3 862.1,575.4 844.3,583.8" fill="url(#gkr)" stroke="#111" stroke-width="1.2" stroke-linejoin="round"/><polygon points="833.9,573.4 844.3,583.8 862.1,575.4 851.6,565.0" fill="#958f84" stroke="#111" stroke-width="1.2" stroke-linejoin="round"/>
<polygon points="865.0,583.3 882.5,600.7 882.0,579.4 871.4,568.9" fill="url(#gkf)" stroke="#111" stroke-width="1.2" stroke-linejoin="round"/><polygon points="882.5,600.7 907.0,588.8 899.6,570.9 882.0,579.4" fill="url(#gkr)" stroke="#111" stroke-width="1.2" stroke-linejoin="round"/><polygon points="871.4,568.9 882.0,579.4 899.6,570.9 888.9,560.5" fill="#958f84" stroke="#111" stroke-width="1.2" stroke-linejoin="round"/>
<polygon points="929.9,571.1 957.1,597.1 956.8,575.7 936.7,556.7" fill="url(#gkf)" stroke="#111" stroke-width="1.2" stroke-linejoin="round"/><polygon points="957.1,597.1 981.3,585.3 974.2,567.3 956.8,575.7" fill="url(#gkr)" stroke="#111" stroke-width="1.2" stroke-linejoin="round"/><polygon points="936.7,556.7 956.8,575.7 974.2,567.3 953.9,548.4" fill="#958f84" stroke="#111" stroke-width="1.2" stroke-linejoin="round"/>
<polygon points="763.1,612.3 779.9,630.0 779.1,608.7 768.9,598.0" fill="url(#gkf)" stroke="#111" stroke-width="1.2" stroke-linejoin="round"/><polygon points="779.9,630.0 804.9,618.0 797.2,600.1 779.1,608.7" fill="url(#gkr)" stroke="#111" stroke-width="1.2" stroke-linejoin="round"/><polygon points="768.9,598.0 779.1,608.7 797.2,600.1 786.9,589.4" fill="#958f84" stroke="#111" stroke-width="1.2" stroke-linejoin="round"/>
<polygon points="802.2,606.8 819.2,624.5 818.6,603.1 808.2,592.5" fill="url(#gkf)" stroke="#111" stroke-width="1.2" stroke-linejoin="round"/><polygon points="819.2,624.5 844.1,612.5 836.5,594.5 818.6,603.1" fill="url(#gkr)" stroke="#111" stroke-width="1.2" stroke-linejoin="round"/><polygon points="808.2,592.5 818.6,603.1 836.5,594.5 826.1,583.9" fill="#958f84" stroke="#111" stroke-width="1.2" stroke-linejoin="round"/>
<polygon points="845.4,605.6 862.9,623.3 862.3,601.9 851.7,591.2" fill="url(#gkf)" stroke="#111" stroke-width="1.2" stroke-linejoin="round"/><polygon points="862.9,623.3 887.7,611.3 880.2,593.3 862.3,601.9" fill="url(#gkr)" stroke="#111" stroke-width="1.2" stroke-linejoin="round"/><polygon points="851.7,591.2 862.3,601.9 880.2,593.3 869.5,582.7" fill="#958f84" stroke="#111" stroke-width="1.2" stroke-linejoin="round"/>
<polygon points="883.0,601.1 900.8,618.8 900.3,597.4 889.5,586.8" fill="url(#gkf)" stroke="#111" stroke-width="1.2" stroke-linejoin="round"/><polygon points="900.8,618.8 925.4,606.8 918.1,588.8 900.3,597.4" fill="url(#gkr)" stroke="#111" stroke-width="1.2" stroke-linejoin="round"/><polygon points="889.5,586.8 900.3,597.4 918.1,588.8 907.2,578.2" fill="#958f84" stroke="#111" stroke-width="1.2" stroke-linejoin="round"/>
<polygon points="780.3,630.5 797.3,648.6 796.6,627.1 786.2,616.2" fill="url(#gkf)" stroke="#111" stroke-width="1.2" stroke-linejoin="round"/><polygon points="797.3,648.6 822.6,636.4 814.8,618.4 796.6,627.1" fill="url(#gkr)" stroke="#111" stroke-width="1.2" stroke-linejoin="round"/><polygon points="786.2,616.2 796.6,627.1 814.8,618.4 804.4,607.5" fill="#958f84" stroke="#111" stroke-width="1.2" stroke-linejoin="round"/>
<polygon points="819.7,625.0 837.1,643.0 836.4,621.5 825.9,610.6" fill="url(#gkf)" stroke="#111" stroke-width="1.2" stroke-linejoin="round"/><polygon points="837.1,643.0 862.1,630.8 854.5,612.8 836.4,621.5" fill="url(#gkr)" stroke="#111" stroke-width="1.2" stroke-linejoin="round"/><polygon points="825.9,610.6 836.4,621.5 854.5,612.8 843.9,602.0" fill="#958f84" stroke="#111" stroke-width="1.2" stroke-linejoin="round"/>
<polygon points="863.4,623.8 881.2,641.9 880.7,620.3 869.8,609.4" fill="url(#gkf)" stroke="#111" stroke-width="1.2" stroke-linejoin="round"/><polygon points="881.2,641.9 906.1,629.7 898.6,611.6 880.7,620.3" fill="url(#gkr)" stroke="#111" stroke-width="1.2" stroke-linejoin="round"/><polygon points="869.8,609.4 880.7,620.3 898.6,611.6 887.8,600.8" fill="#958f84" stroke="#111" stroke-width="1.2" stroke-linejoin="round"/>
<polygon points="901.3,619.3 919.4,637.3 919.0,615.8 908.0,604.9" fill="url(#gkf)" stroke="#111" stroke-width="1.2" stroke-linejoin="round"/><polygon points="919.4,637.3 944.2,625.1 936.9,607.0 919.0,615.8" fill="url(#gkr)" stroke="#111" stroke-width="1.2" stroke-linejoin="round"/><polygon points="908.0,604.9 919.0,615.8 936.9,607.0 925.8,596.3" fill="#958f84" stroke="#111" stroke-width="1.2" stroke-linejoin="round"/>
<polygon points="971.9,611.2 995.1,633.4 994.9,611.7 979.0,596.7" fill="url(#gkf)" stroke="#111" stroke-width="1.2" stroke-linejoin="round"/><polygon points="995.1,633.4 1019.5,621.2 1012.5,603.1 994.9,611.7" fill="url(#gkr)" stroke="#111" stroke-width="1.2" stroke-linejoin="round"/><polygon points="979.0,596.7 994.9,611.7 1012.5,603.1 996.5,588.2" fill="#958f84" stroke="#111" stroke-width="1.2" stroke-linejoin="round"/>
<polygon points="700.2,591.4 838.4,741.8 837.8,719.6 705.5,577.2" fill="url(#gkf)" stroke="#111" stroke-width="1.2" stroke-linejoin="round"/><polygon points="838.4,741.8 864.6,728.7 856.6,710.2 837.8,719.6" fill="url(#gkr)" stroke="#111" stroke-width="1.2" stroke-linejoin="round"/><polygon points="705.5,577.2 837.8,719.6 856.6,710.2 723.5,568.8" fill="#958f84" stroke="#111" stroke-width="1.2" stroke-linejoin="round"/>
<polygon points="797.8,649.1 815.2,667.6 814.5,645.9 803.9,634.8" fill="url(#gkf)" stroke="#111" stroke-width="1.2" stroke-linejoin="round"/><polygon points="815.2,667.6 840.5,655.1 832.8,637.0 814.5,645.9" fill="url(#gkr)" stroke="#111" stroke-width="1.2" stroke-linejoin="round"/><polygon points="803.9,634.8 814.5,645.9 832.8,637.0 822.2,626.0" fill="#958f84" stroke="#111" stroke-width="1.2" stroke-linejoin="round"/>
<polygon points="837.6,643.5 855.3,661.9 854.7,640.2 843.9,629.2" fill="url(#gkf)" stroke="#111" stroke-width="1.2" stroke-linejoin="round"/><polygon points="855.3,661.9 880.5,649.5 872.9,631.4 854.7,640.2" fill="url(#gkr)" stroke="#111" stroke-width="1.2" stroke-linejoin="round"/><polygon points="843.9,629.2 854.7,640.2 872.9,631.4 862.0,620.4" fill="#958f84" stroke="#111" stroke-width="1.2" stroke-linejoin="round"/>
<polygon points="881.7,642.4 899.8,660.8 899.3,639.1 888.3,628.0" fill="url(#gkf)" stroke="#111" stroke-width="1.2" stroke-linejoin="round"/><polygon points="899.8,660.8 924.9,648.4 917.4,630.2 899.3,639.1" fill="url(#gkr)" stroke="#111" stroke-width="1.2" stroke-linejoin="round"/><polygon points="888.3,628.0 899.3,639.1 917.4,630.2 906.3,619.2" fill="#958f84" stroke="#111" stroke-width="1.2" stroke-linejoin="round"/>
<polygon points="919.9,637.8 938.4,656.2 938.0,634.5 926.8,623.4" fill="url(#gkf)" stroke="#111" stroke-width="1.2" stroke-linejoin="round"/><polygon points="938.4,656.2 963.3,643.8 956.0,625.6 938.0,634.5" fill="url(#gkr)" stroke="#111" stroke-width="1.2" stroke-linejoin="round"/><polygon points="926.8,623.4 938.0,634.5 956.0,625.6 944.7,614.6" fill="#958f84" stroke="#111" stroke-width="1.2" stroke-linejoin="round"/>
<polygon points="995.9,634.1 1019.6,656.8 1019.5,635.0 1003.2,619.6" fill="url(#gkf)" stroke="#111" stroke-width="1.2" stroke-linejoin="round"/><polygon points="1019.6,656.8 1044.2,644.4 1037.2,626.1 1019.5,635.0" fill="url(#gkr)" stroke="#111" stroke-width="1.2" stroke-linejoin="round"/><polygon points="1003.2,619.6 1019.5,635.0 1037.2,626.1 1020.9,610.9" fill="#958f84" stroke="#111" stroke-width="1.2" stroke-linejoin="round"/>
<polygon points="815.6,668.1 833.3,686.8 832.6,665.0 821.9,653.7" fill="url(#gkf)" stroke="#111" stroke-width="1.2" stroke-linejoin="round"/><polygon points="833.3,686.8 858.9,674.2 851.1,656.0 832.6,665.0" fill="url(#gkr)" stroke="#111" stroke-width="1.2" stroke-linejoin="round"/><polygon points="821.9,653.7 832.6,665.0 851.1,656.0 840.3,644.8" fill="#958f84" stroke="#111" stroke-width="1.2" stroke-linejoin="round"/>
<polygon points="855.7,662.4 873.8,681.1 873.2,659.3 862.3,648.0" fill="url(#gkf)" stroke="#111" stroke-width="1.2" stroke-linejoin="round"/><polygon points="873.8,681.1 899.2,668.5 891.5,650.3 873.2,659.3" fill="url(#gkr)" stroke="#111" stroke-width="1.2" stroke-linejoin="round"/><polygon points="862.3,648.0 873.2,659.3 891.5,650.3 880.5,639.1" fill="#958f84" stroke="#111" stroke-width="1.2" stroke-linejoin="round"/>
<polygon points="900.3,661.3 918.8,680.0 918.4,658.2 907.1,646.9" fill="url(#gkf)" stroke="#111" stroke-width="1.2" stroke-linejoin="round"/><polygon points="918.8,680.0 944.0,667.4 936.6,649.1 918.4,658.2" fill="url(#gkr)" stroke="#111" stroke-width="1.2" stroke-linejoin="round"/><polygon points="907.1,646.9 918.4,658.2 936.6,649.1 925.3,637.9" fill="#958f84" stroke="#111" stroke-width="1.2" stroke-linejoin="round"/>
<polygon points="938.9,656.7 957.7,675.4 957.4,653.5 946.0,642.3" fill="url(#gkf)" stroke="#111" stroke-width="1.2" stroke-linejoin="round"/><polygon points="957.7,675.4 982.8,662.8 975.5,644.5 957.4,653.5" fill="url(#gkr)" stroke="#111" stroke-width="1.2" stroke-linejoin="round"/><polygon points="946.0,642.3 957.4,653.5 975.5,644.5 964.0,633.3" fill="#958f84" stroke="#111" stroke-width="1.2" stroke-linejoin="round"/>
<polygon points="1020.4,657.5 1044.7,680.8 1044.6,658.7 1028.0,643.0" fill="url(#gkf)" stroke="#111" stroke-width="1.2" stroke-linejoin="round"/><polygon points="1044.7,680.8 1069.5,668.1 1062.4,649.7 1044.6,658.7" fill="url(#gkr)" stroke="#111" stroke-width="1.2" stroke-linejoin="round"/><polygon points="1028.0,643.0 1044.6,658.7 1062.4,649.7 1045.7,634.1" fill="#958f84" stroke="#111" stroke-width="1.2" stroke-linejoin="round"/>
<polygon points="833.8,687.4 851.8,706.5 851.2,684.5 840.2,673.0" fill="url(#gkf)" stroke="#111" stroke-width="1.2" stroke-linejoin="round"/><polygon points="851.8,706.5 877.5,693.7 869.7,675.4 851.2,684.5" fill="url(#gkr)" stroke="#111" stroke-width="1.2" stroke-linejoin="round"/><polygon points="840.2,673.0 851.2,684.5 869.7,675.4 858.7,663.9" fill="#958f84" stroke="#111" stroke-width="1.2" stroke-linejoin="round"/>
<polygon points="874.3,681.6 892.6,700.7 892.2,678.7 881.0,667.3" fill="url(#gkf)" stroke="#111" stroke-width="1.2" stroke-linejoin="round"/><polygon points="892.6,700.7 918.2,687.9 910.6,669.6 892.2,678.7" fill="url(#gkr)" stroke="#111" stroke-width="1.2" stroke-linejoin="round"/><polygon points="881.0,667.3 892.2,678.7 910.6,669.6 899.3,658.2" fill="#958f84" stroke="#111" stroke-width="1.2" stroke-linejoin="round"/>
<polygon points="919.3,680.6 938.1,699.6 937.7,677.6 926.3,666.1" fill="url(#gkf)" stroke="#111" stroke-width="1.2" stroke-linejoin="round"/><polygon points="938.1,699.6 963.5,686.8 956.1,668.5 937.7,677.6" fill="url(#gkr)" stroke="#111" stroke-width="1.2" stroke-linejoin="round"/><polygon points="926.3,666.1 937.7,677.6 956.1,668.5 944.6,657.0" fill="#958f84" stroke="#111" stroke-width="1.2" stroke-linejoin="round"/>
<polygon points="958.3,675.9 977.5,695.0 977.2,673.0 965.5,661.5" fill="url(#gkf)" stroke="#111" stroke-width="1.2" stroke-linejoin="round"/><polygon points="977.5,695.0 1002.7,682.2 995.4,663.8 977.2,673.0" fill="url(#gkr)" stroke="#111" stroke-width="1.2" stroke-linejoin="round"/><polygon points="965.5,661.5 977.2,673.0 995.4,663.8 983.7,652.4" fill="#958f84" stroke="#111" stroke-width="1.2" stroke-linejoin="round"/>
<polygon points="852.3,707.0 870.6,726.5 870.1,704.4 858.9,692.7" fill="url(#gkf)" stroke="#111" stroke-width="1.2" stroke-linejoin="round"/><polygon points="870.6,726.5 896.5,713.5 888.8,695.1 870.1,704.4" fill="url(#gkr)" stroke="#111" stroke-width="1.2" stroke-linejoin="round"/><polygon points="858.9,692.7 870.1,704.4 888.8,695.1 877.5,683.4" fill="#958f84" stroke="#111" stroke-width="1.2" stroke-linejoin="round"/>
<polygon points="893.2,701.2 911.9,720.7 911.4,698.6 900.0,686.8" fill="url(#gkf)" stroke="#111" stroke-width="1.2" stroke-linejoin="round"/><polygon points="911.9,720.7 937.6,707.7 930.0,689.3 911.4,698.6" fill="url(#gkr)" stroke="#111" stroke-width="1.2" stroke-linejoin="round"/><polygon points="900.0,686.8 911.4,698.6 930.0,689.3 918.5,677.6" fill="#958f84" stroke="#111" stroke-width="1.2" stroke-linejoin="round"/>
<polygon points="1045.5,681.5 1070.4,705.3 1070.3,683.1 1053.3,667.0" fill="url(#gkf)" stroke="#111" stroke-width="1.2" stroke-linejoin="round"/><polygon points="1070.4,705.3 1095.3,692.4 1088.3,673.9 1070.3,683.1" fill="url(#gkr)" stroke="#111" stroke-width="1.2" stroke-linejoin="round"/><polygon points="1053.3,667.0 1070.3,683.1 1088.3,673.9 1071.2,657.9" fill="#958f84" stroke="#111" stroke-width="1.2" stroke-linejoin="round"/>
<polygon points="938.6,700.2 957.8,719.6 957.5,697.5 945.8,685.7" fill="url(#gkf)" stroke="#111" stroke-width="1.2" stroke-linejoin="round"/><polygon points="957.8,719.6 983.4,706.6 975.9,688.2 957.5,697.5" fill="url(#gkr)" stroke="#111" stroke-width="1.2" stroke-linejoin="round"/><polygon points="945.8,685.7 957.5,697.5 975.9,688.2 964.2,676.5" fill="#958f84" stroke="#111" stroke-width="1.2" stroke-linejoin="round"/>
<polygon points="978.0,695.5 997.5,714.9 997.3,692.8 985.4,681.1" fill="url(#gkf)" stroke="#111" stroke-width="1.2" stroke-linejoin="round"/><polygon points="997.5,714.9 1022.9,702.0 1015.7,683.5 997.3,692.8" fill="url(#gkr)" stroke="#111" stroke-width="1.2" stroke-linejoin="round"/><polygon points="985.4,681.1 997.3,692.8 1015.7,683.5 1003.7,671.8" fill="#958f84" stroke="#111" stroke-width="1.2" stroke-linejoin="round"/>
<polygon points="871.2,727.1 889.9,746.9 889.3,724.7 878.0,712.7" fill="url(#gkf)" stroke="#111" stroke-width="1.2" stroke-linejoin="round"/><polygon points="889.9,746.9 915.9,733.7 908.1,715.2 889.3,724.7" fill="url(#gkr)" stroke="#111" stroke-width="1.2" stroke-linejoin="round"/><polygon points="878.0,712.7 889.3,724.7 908.1,715.2 896.7,703.3" fill="#958f84" stroke="#111" stroke-width="1.2" stroke-linejoin="round"/>
<polygon points="912.4,721.2 931.5,741.0 931.1,718.8 919.5,706.8" fill="url(#gkf)" stroke="#111" stroke-width="1.2" stroke-linejoin="round"/><polygon points="931.5,741.0 957.4,727.8 949.8,709.3 931.1,718.8" fill="url(#gkr)" stroke="#111" stroke-width="1.2" stroke-linejoin="round"/><polygon points="919.5,706.8 931.1,718.8 949.8,709.3 938.1,697.5" fill="#958f84" stroke="#111" stroke-width="1.2" stroke-linejoin="round"/>
<polygon points="998.1,715.5 1018.0,735.3 1017.9,712.9 1005.7,701.0" fill="url(#gkf)" stroke="#111" stroke-width="1.2" stroke-linejoin="round"/><polygon points="1018.0,735.3 1043.6,722.1 1036.3,703.5 1017.9,712.9" fill="url(#gkr)" stroke="#111" stroke-width="1.2" stroke-linejoin="round"/><polygon points="1005.7,701.0 1017.9,712.9 1036.3,703.5 1024.1,691.7" fill="#958f84" stroke="#111" stroke-width="1.2" stroke-linejoin="round"/>
<polygon points="838.3,741.7 865.9,771.7 865.3,749.3 845.0,727.4" fill="url(#gkf)" stroke="#111" stroke-width="1.2" stroke-linejoin="round"/><polygon points="865.9,771.7 892.3,758.3 884.4,739.7 865.3,749.3" fill="url(#gkr)" stroke="#111" stroke-width="1.2" stroke-linejoin="round"/><polygon points="845.0,727.4 865.3,749.3 884.4,739.7 863.9,717.9" fill="#958f84" stroke="#111" stroke-width="1.2" stroke-linejoin="round"/>
<polygon points="927.8,737.2 954.1,764.5 953.8,742.1 935.1,722.8" fill="url(#gkf)" stroke="#111" stroke-width="1.2" stroke-linejoin="round"/><polygon points="954.1,764.5 1011.6,734.9 1004.1,716.3 953.8,742.1" fill="url(#gkr)" stroke="#111" stroke-width="1.2" stroke-linejoin="round"/><polygon points="935.1,722.8 953.8,742.1 1004.1,716.3 985.1,697.4" fill="#958f84" stroke="#111" stroke-width="1.2" stroke-linejoin="round"/>
<polygon points="1092.4,726.5 1112.3,745.6 1112.5,723.1 1100.7,712.0" fill="url(#gkf)" stroke="#111" stroke-width="1.2" stroke-linejoin="round"/><polygon points="1112.3,745.6 1138.0,732.1 1131.0,713.4 1112.5,723.1" fill="url(#gkr)" stroke="#111" stroke-width="1.2" stroke-linejoin="round"/><polygon points="1100.7,712.0 1112.5,723.1 1131.0,713.4 1119.2,702.4" fill="#958f84" stroke="#111" stroke-width="1.2" stroke-linejoin="round"/>
<polygon points="889.8,746.9 922.6,781.8 922.2,759.2 896.8,732.5" fill="url(#gkf)" stroke="#111" stroke-width="1.2" stroke-linejoin="round"/><polygon points="922.6,781.8 948.6,768.4 940.8,749.7 922.2,759.2" fill="url(#gkr)" stroke="#111" stroke-width="1.2" stroke-linejoin="round"/><polygon points="896.8,732.5 922.2,759.2 940.8,749.7 915.3,723.1" fill="#958f84" stroke="#111" stroke-width="1.2" stroke-linejoin="round"/>
<polygon points="1061.5,742.6 1081.3,761.9 1081.3,739.3 1069.7,728.1" fill="url(#gkf)" stroke="#111" stroke-width="1.2" stroke-linejoin="round"/><polygon points="1081.3,761.9 1107.2,748.3 1100.1,729.6 1081.3,739.3" fill="url(#gkr)" stroke="#111" stroke-width="1.2" stroke-linejoin="round"/><polygon points="1069.7,728.1 1081.3,739.3 1100.1,729.6 1088.4,718.4" fill="#958f84" stroke="#111" stroke-width="1.2" stroke-linejoin="round"/>
<polygon points="1113.9,747.1 1134.3,766.6 1134.4,743.9 1122.5,732.6" fill="url(#gkf)" stroke="#111" stroke-width="1.2" stroke-linejoin="round"/><polygon points="1134.3,766.6 1160.0,752.8 1153.1,734.0 1134.4,743.9" fill="url(#gkr)" stroke="#111" stroke-width="1.2" stroke-linejoin="round"/><polygon points="1122.5,732.6 1134.4,743.9 1153.1,734.0 1141.1,722.8" fill="#958f84" stroke="#111" stroke-width="1.2" stroke-linejoin="round"/>
<polygon points="1030.3,758.9 1049.9,778.5 1049.8,755.8 1038.3,744.4" fill="url(#gkf)" stroke="#111" stroke-width="1.2" stroke-linejoin="round"/><polygon points="1049.9,778.5 1076.1,764.7 1068.8,745.9 1049.8,755.8" fill="url(#gkr)" stroke="#111" stroke-width="1.2" stroke-linejoin="round"/><polygon points="1038.3,744.4 1049.8,755.8 1068.8,745.9 1057.2,734.6" fill="#958f84" stroke="#111" stroke-width="1.2" stroke-linejoin="round"/>
<polygon points="1082.9,763.5 1103.0,783.2 1103.1,760.4 1091.3,749.0" fill="url(#gkf)" stroke="#111" stroke-width="1.2" stroke-linejoin="round"/><polygon points="1103.0,783.2 1129.1,769.3 1122.0,750.5 1103.1,760.4" fill="url(#gkr)" stroke="#111" stroke-width="1.2" stroke-linejoin="round"/><polygon points="1091.3,749.0 1103.1,760.4 1122.0,750.5 1110.1,739.1" fill="#958f84" stroke="#111" stroke-width="1.2" stroke-linejoin="round"/>
<polygon points="998.8,775.3 1018.2,795.2 1018.0,772.4 1006.6,760.9" fill="url(#gkf)" stroke="#111" stroke-width="1.2" stroke-linejoin="round"/><polygon points="1018.2,795.2 1044.6,781.2 1037.2,762.4 1018.0,772.4" fill="url(#gkr)" stroke="#111" stroke-width="1.2" stroke-linejoin="round"/><polygon points="1006.6,760.9 1018.0,772.4 1037.2,762.4 1025.7,751.0" fill="#958f84" stroke="#111" stroke-width="1.2" stroke-linejoin="round"/>
<polygon points="1135.9,768.1 1156.6,787.9 1156.9,765.1 1144.7,753.6" fill="url(#gkf)" stroke="#111" stroke-width="1.2" stroke-linejoin="round"/><polygon points="1156.6,787.9 1182.6,774.0 1175.6,755.1 1156.9,765.1" fill="url(#gkr)" stroke="#111" stroke-width="1.2" stroke-linejoin="round"/><polygon points="1144.7,753.6 1156.9,765.1 1175.6,755.1 1163.4,743.6" fill="#958f84" stroke="#111" stroke-width="1.2" stroke-linejoin="round"/>
<polygon points="1051.5,780.0 1071.4,800.0 1071.4,777.1 1059.7,765.5" fill="url(#gkf)" stroke="#111" stroke-width="1.2" stroke-linejoin="round"/><polygon points="1071.4,800.0 1097.8,786.0 1090.5,767.1 1071.4,777.1" fill="url(#gkr)" stroke="#111" stroke-width="1.2" stroke-linejoin="round"/><polygon points="1059.7,765.5 1071.4,777.1 1090.5,767.1 1078.7,755.6" fill="#958f84" stroke="#111" stroke-width="1.2" stroke-linejoin="round"/>
<polygon points="1104.6,784.7 1125.2,804.8 1125.3,781.9 1113.3,770.2" fill="url(#gkf)" stroke="#111" stroke-width="1.2" stroke-linejoin="round"/><polygon points="1125.2,804.8 1151.4,790.7 1144.3,771.8 1125.3,781.9" fill="url(#gkr)" stroke="#111" stroke-width="1.2" stroke-linejoin="round"/><polygon points="1113.3,770.2 1125.3,781.9 1144.3,771.8 1132.2,760.2" fill="#958f84" stroke="#111" stroke-width="1.2" stroke-linejoin="round"/>
<polygon points="1019.7,796.7 1039.5,816.9 1039.4,794.0 1027.8,782.3" fill="url(#gkf)" stroke="#111" stroke-width="1.2" stroke-linejoin="round"/><polygon points="1039.5,816.9 1066.1,802.8 1058.7,783.9 1039.4,794.0" fill="url(#gkr)" stroke="#111" stroke-width="1.2" stroke-linejoin="round"/><polygon points="1027.8,782.3 1039.4,794.0 1058.7,783.9 1047.0,772.2" fill="#958f84" stroke="#111" stroke-width="1.2" stroke-linejoin="round"/>
<polygon points="1158.3,789.5 1179.4,809.7 1179.7,786.7 1167.3,775.0" fill="url(#gkf)" stroke="#111" stroke-width="1.2" stroke-linejoin="round"/><polygon points="1179.4,809.7 1205.5,795.5 1198.6,776.5 1179.7,786.7" fill="url(#gkr)" stroke="#111" stroke-width="1.2" stroke-linejoin="round"/><polygon points="1167.3,775.0 1179.7,786.7 1198.6,776.5 1186.2,764.9" fill="#958f84" stroke="#111" stroke-width="1.2" stroke-linejoin="round"/>
<polygon points="911.1,820.1 930.7,841.4 930.3,818.5 918.5,805.7" fill="url(#gkf)" stroke="#111" stroke-width="1.2" stroke-linejoin="round"/><polygon points="930.7,841.4 990.4,810.0 982.7,791.1 930.3,818.5" fill="url(#gkr)" stroke="#111" stroke-width="1.2" stroke-linejoin="round"/><polygon points="918.5,805.7 930.3,818.5 982.7,791.1 970.6,778.6" fill="#958f84" stroke="#111" stroke-width="1.2" stroke-linejoin="round"/>
<polygon points="1073.0,801.6 1093.4,821.9 1093.5,798.9 1081.5,787.1" fill="url(#gkf)" stroke="#111" stroke-width="1.2" stroke-linejoin="round"/><polygon points="1093.4,821.9 1119.9,807.7 1112.6,788.7 1093.5,798.9" fill="url(#gkr)" stroke="#111" stroke-width="1.2" stroke-linejoin="round"/><polygon points="1081.5,787.1 1093.5,798.9 1112.6,788.7 1100.6,776.9" fill="#958f84" stroke="#111" stroke-width="1.2" stroke-linejoin="round"/>
<polygon points="1126.8,806.4 1147.8,826.9 1148.0,803.8 1135.7,791.9" fill="url(#gkf)" stroke="#111" stroke-width="1.2" stroke-linejoin="round"/><polygon points="1147.8,826.9 1174.2,812.6 1167.1,793.5 1148.0,803.8" fill="url(#gkr)" stroke="#111" stroke-width="1.2" stroke-linejoin="round"/><polygon points="1135.7,791.9 1148.0,803.8 1167.1,793.5 1154.7,781.7" fill="#958f84" stroke="#111" stroke-width="1.2" stroke-linejoin="round"/>
<polygon points="1041.1,818.6 1061.3,839.2 1061.2,816.1 1049.4,804.1" fill="url(#gkf)" stroke="#111" stroke-width="1.2" stroke-linejoin="round"/><polygon points="1061.3,839.2 1088.1,824.8 1080.6,805.7 1061.2,816.1" fill="url(#gkr)" stroke="#111" stroke-width="1.2" stroke-linejoin="round"/><polygon points="1049.4,804.1 1061.2,816.1 1080.6,805.7 1068.7,793.9" fill="#958f84" stroke="#111" stroke-width="1.2" stroke-linejoin="round"/>
<polygon points="1095.0,823.5 1115.8,844.3 1115.9,821.1 1103.7,809.1" fill="url(#gkf)" stroke="#111" stroke-width="1.2" stroke-linejoin="round"/><polygon points="1115.8,844.3 1142.5,829.8 1135.2,810.7 1115.9,821.1" fill="url(#gkr)" stroke="#111" stroke-width="1.2" stroke-linejoin="round"/><polygon points="1103.7,809.1 1115.9,821.1 1135.2,810.7 1123.0,798.7" fill="#958f84" stroke="#111" stroke-width="1.2" stroke-linejoin="round"/>
<polygon points="963.5,825.2 1005.2,869.5 1005.0,846.4 971.3,810.8" fill="url(#gkf)" stroke="#111" stroke-width="1.2" stroke-linejoin="round"/><polygon points="1005.2,869.5 1032.1,855.1 1024.4,836.0 1005.0,846.4" fill="url(#gkr)" stroke="#111" stroke-width="1.2" stroke-linejoin="round"/><polygon points="971.3,810.8 1005.0,846.4 1024.4,836.0 990.4,800.8" fill="#958f84" stroke="#111" stroke-width="1.2" stroke-linejoin="round"/>
<polygon points="1062.9,840.8 1083.5,861.8 1083.5,838.6 1071.4,826.4" fill="url(#gkf)" stroke="#111" stroke-width="1.2" stroke-linejoin="round"/><polygon points="1083.5,861.8 1110.4,847.2 1103.0,828.1 1083.5,838.6" fill="url(#gkr)" stroke="#111" stroke-width="1.2" stroke-linejoin="round"/><polygon points="1071.4,826.4 1083.5,838.6 1103.0,828.1 1090.9,815.9" fill="#958f84" stroke="#111" stroke-width="1.2" stroke-linejoin="round"/>
<polygon points="931.8,843.2 972.3,887.3 972.0,864.0 939.4,828.9" fill="url(#gkf)" stroke="#111" stroke-width="1.2" stroke-linejoin="round"/><polygon points="972.3,887.3 1000.1,872.3 992.2,853.2 972.0,864.0" fill="url(#gkr)" stroke="#111" stroke-width="1.2" stroke-linejoin="round"/><polygon points="939.4,828.9 972.0,864.0 992.2,853.2 959.4,818.3" fill="#958f84" stroke="#111" stroke-width="1.2" stroke-linejoin="round"/>
<polygon points="973.0,888.2 993.4,910.5 993.2,887.0 981.0,873.9" fill="url(#gkf)" stroke="#111" stroke-width="1.2" stroke-linejoin="round"/><polygon points="993.4,910.5 1054.2,877.5 1046.5,858.3 993.2,887.0" fill="url(#gkr)" stroke="#111" stroke-width="1.2" stroke-linejoin="round"/><polygon points="981.0,873.9 993.2,887.0 1046.5,858.3 1034.1,845.5" fill="#958f84" stroke="#111" stroke-width="1.2" stroke-linejoin="round"/>
<defs><filter id="vcsh" x="-50%" y="-50%" width="200%" height="200%"><feGaussianBlur stdDeviation="5"/></filter><linearGradient id="vct" x1="0" y1="0" x2="1" y2="1"><stop offset="0" stop-color="#f6f6f6"/><stop offset="1" stop-color="#e9e9e9"/></linearGradient><linearGradient id="vcl" x1="0" y1="0" x2="0" y2="1"><stop offset="0" stop-color="#ededed"/><stop offset="1" stop-color="#e2e2e2"/></linearGradient></defs>
<polygon points="1834,222 1858,248 1898,230 1905,205" fill="#000" opacity="0.25" filter="url(#vcsh)"/>
<polygon points="1831,179.6 1856.3,205.3 1856.9,243.1 1834.7,216.7" fill="url(#vcl)" opacity="0.8"/>
<polygon points="1856.3,205.3 1899.5,187.4 1895.9,225.1 1856.9,243.1" fill="url(#vcl)" opacity="0.8"/>
<polygon points="1831,179.6 1871.9,167 1899.5,187.4 1856.3,205.3" fill="url(#vct)" opacity="0.8"/>
<polyline points="1831,179.6 1871.9,167 1899.5,187.4 1895.9,225.1 1856.9,243.1 1834.7,216.7" stroke="#777" stroke-width="0.9" stroke-dasharray="3 2" fill="none"/>
<polyline points="1831,179.6 1856.3,205.3 1899.5,187.4" stroke="#777" stroke-width="0.9" stroke-dasharray="3 2" fill="none"/>
<line x1="1856.3" y1="205.3" x2="1856.9" y2="243.1" stroke="#777" stroke-width="0.9" stroke-dasharray="3 2" fill="none"/>
<path d="M1850 180l7 11M1854 189l10-5M1857 184l8-1" stroke="#8a8a8a" stroke-width="1.4" fill="none"/>
<path d="M1839 199l2 3M1846 203l-2 3M1837 207l12 5M1840 210v9M1845 212v10M1848 208l1 15" stroke="#8a8a8a" stroke-width="1.1" fill="none"/>
<path d="M1868 219l19-8M1881 206l-12 19M1875 219v8l11-4v-8l-11 4" stroke="#8a8a8a" stroke-width="1.4" fill="none"/>
<line x1="1829.3" y1="173.6" x2="1834.7" y2="216.7" stroke="#4a55e8" stroke-width="2"/>
<line x1="1834.7" y1="216.7" x2="1860" y2="248" stroke="#f07070" stroke-width="2"/>
<text x="1828" y="170" font-family="Liberation Sans" font-size="10" fill="#5a66f0" text-anchor="middle">Z</text>
<text x="1865" y="259" font-family="Liberation Sans" font-size="10" fill="#f06060" text-anchor="middle">X</text></svg></div>

<div style="position:absolute;left:0;top:0;width:8px;height:40px;background:#dde3ea"></div>
<div style="position:absolute;left:0;top:40px;width:8px;height:64px;background:#fff;border-radius:0 6px 0 0"></div>
<div style="position:absolute;left:0;top:86px;width:8px;height:1px;background:#e4e4e4"></div>
<svg style="position:absolute;left:0;top:94px" width="8" height="6"><path d="M0 5l3-4 3 4z" fill="#333"/></svg>
<div style="position:absolute;left:0;top:104px;width:6px;height:289px;background:#575757"></div>
<div style="position:absolute;left:0;top:393px;width:8px;height:647px;background:#fff"></div>
<svg style="position:absolute;left:0;top:1030px" width="8" height="6"><path d="M0 1h5l-2.5 3z" fill="#333"/></svg>
<div style="position:absolute;left:0;top:1040px;width:8px;height:128px;background:#000"></div>
<div style="position:absolute;left:0;top:1040px;width:8px;height:40px;background:#1a1a1a"></div>


<div style="position:absolute;left:8px;top:0;width:1920px;height:23px;background:#fff"></div>
<svg style="position:absolute;left:11px;top:3px" width="15" height="17" viewBox="0 0 15 17">
 <rect x="0.5" y="0.5" width="14" height="16" rx="2" fill="#e8640c"/>
 <rect x="0.5" y="0.5" width="14" height="11" rx="2" fill="#f47a1f"/>
 <rect x="1.5" y="11.5" width="12" height="5" rx="1" fill="#9b3d0b"/>
 <text x="7.5" y="9.5" font-family="Liberation Sans" font-weight="bold" font-size="9" fill="#fff" text-anchor="middle">F</text>
</svg>
<div style="position:absolute;left:31px;top:4px;font-family:'Liberation Sans',sans-serif;font-size:12px;color:#000;white-space:nowrap;letter-spacing:-0.3px">Autodesk Fusion <span style="letter-spacing:3px">個人用</span>(<span style="letter-spacing:3px">商用利用不可</span>)</div>
<div style="position:absolute;left:1807px;top:10px;width:11px;height:1px;background:#000"></div>
<svg style="position:absolute;left:1851px;top:4px" width="12" height="12"><path d="M2.5 3.5h7v7h-7z M4.5 3.5v-2h6v6h-1" fill="none" stroke="#000" stroke-width="1"/></svg>
<svg style="position:absolute;left:1897px;top:4px" width="12" height="12"><path d="M1 1L11 11M11 1L1 11" stroke="#000" stroke-width="1.2"/></svg>


<div style="position:absolute;left:8px;top:23px;width:1920px;height:32px;background:#cacaca"></div>
<svg style="position:absolute;left:17px;top:32px" width="15" height="15">
 <g fill="#5f5f5f"><rect x="0" y="0" width="4" height="4" rx="0.8"/><rect x="5.5" y="0" width="4" height="4" rx="0.8"/><rect x="11" y="0" width="4" height="4" rx="0.8"/>
 <rect x="0" y="5.5" width="4" height="4" rx="0.8"/><rect x="5.5" y="5.5" width="4" height="4" rx="0.8"/><rect x="11" y="5.5" width="4" height="4" rx="0.8"/>
 <rect x="0" y="11" width="4" height="4" rx="0.8"/><rect x="5.5" y="11" width="4" height="4" rx="0.8"/><rect x="11" y="11" width="4" height="4" rx="0.8"/></g>
</svg>
<svg style="position:absolute;left:50px;top:31px" width="28" height="16">
 <path d="M0.5 1.5q0-1 1-1h7l4 4v10q0 1-1 1h-10q-1 0-1-1z" fill="#5f5f5f"/><path d="M8.5 0.5v4h4" fill="#cacaca"/>
 <path d="M19 5h7l-3.5 5z" fill="#5f5f5f"/>
</svg>
<svg style="position:absolute;left:95px;top:32px" width="15" height="15">
 <path d="M0 1q0-1 1-1h13q1 0 1 1v13q0 1-1 1h-11l-3-3z" fill="#8a8a8a"/>
 <rect x="3" y="1" width="9" height="5" fill="#cacaca"/><rect x="4.5" y="1" width="6" height="3.5" fill="#8a8a8a"/>
 <rect x="3.5" y="9" width="8" height="6" fill="#cacaca"/><rect x="5" y="10.5" width="5" height="4.5" fill="#8a8a8a"/>
</svg>
<svg style="position:absolute;left:127px;top:32px" width="30" height="15">
 <path d="M2 6h7q4 0 4 4v3" fill="none" stroke="#5f5f5f" stroke-width="2"/><path d="M6 1.5L1.5 6 6 10.5" fill="none" stroke="#5f5f5f" stroke-width="2"/>
 <path d="M21 4h7l-3.5 5z" fill="#5f5f5f"/>
</svg>
<svg style="position:absolute;left:167px;top:32px" width="30" height="15">
 <path d="M13 6h-7q-4 0-4 4v3" fill="none" stroke="#9a9a9a" stroke-width="2"/><path d="M9 1.5L13.5 6 9 10.5" fill="none" stroke="#9a9a9a" stroke-width="2"/>
 <path d="M20 4h7l-3.5 5z" fill="#9a9a9a"/>
</svg>
<div style="position:absolute;left:201px;top:27px;width:753px;height:28px;background:#bcbcbc;border-radius:4px 4px 0 0"></div>
<svg style="position:absolute;left:530px;top:33px" width="12" height="16"><path d="M3 7V4.5a3 3 0 0 1 6 0V7" fill="none" stroke="#6d6d6d" stroke-width="1.5"/><rect x="1" y="7" width="10" height="8" rx="1" fill="#6d6d6d"/><path d="M3 10h6M3 12.5h6" stroke="#bcbcbc" stroke-width="1"/></svg>
<div style="position:absolute;left:547px;top:34px;font-family:'Liberation Sans',sans-serif;font-size:12px;color:#6a6a6a;white-space:nowrap">M5DialPP v2</div>
<svg style="position:absolute;left:937px;top:36px" width="10" height="10"><path d="M1 1L9 9M9 1L1 9" stroke="#777" stroke-width="1.3"/></svg>
<div style="position:absolute;left:958px;top:27px;width:753px;height:28px;background:#f1f1f1;border-radius:4px 4px 0 0"></div>
<svg style="position:absolute;left:1289px;top:34px" width="14" height="16"><path d="M7 0.5L13.5 4v8L7 15.5 0.5 12V4z" fill="#f08a28"/><path d="M7 0.5L13.5 4 7 7.5 0.5 4z" fill="#fbb462"/><path d="M7 7.5L13.5 4v8L7 15.5z" fill="#e06a10"/></svg>
<div style="position:absolute;left:1307px;top:34px;font-family:'Liberation Sans',sans-serif;font-size:12px;color:#1a1a1a;white-space:nowrap">ML-G10 v11</div>
<svg style="position:absolute;left:1694px;top:36px" width="10" height="10"><path d="M1 1L9 9M9 1L1 9" stroke="#666" stroke-width="1.2"/></svg>
<div style="position:absolute;left:1715px;top:27px;width:28px;height:28px;background:#bcbcbc;border-radius:4px 4px 0 0"></div>
<svg style="position:absolute;left:1722px;top:34px" width="14" height="14"><path d="M7 1v12M1 7h12" stroke="#777" stroke-width="2.2"/></svg>
<svg style="position:absolute;left:1754px;top:31px" width="18" height="18"><circle cx="9" cy="9" r="8" fill="#0696d7"/><path d="M7 7v7M3.5 10.5h7" stroke="#fff" stroke-width="1.8"/><path d="M11.5 3.5v4M9.5 5.5h4M13.5 8v2.5M12.3 9.2h2.4" stroke="#fff" stroke-width="1.1"/></svg>
<svg style="position:absolute;left:1787px;top:31px" width="18" height="18"><circle cx="9" cy="9" r="7.8" fill="none" stroke="#5f5f5f" stroke-width="1"/><circle cx="9" cy="9" r="6.3" fill="#5f5f5f"/><path d="M8.5 4.5v5h3.5" fill="none" stroke="#cacaca" stroke-width="1.2"/></svg>
<svg style="position:absolute;left:1820px;top:30px" width="18" height="18"><path d="M9 2q-5 1-5 7v3l-1.5 2h13l-1.5-2V9q0-6-5-7z" fill="#5f5f5f"/><path d="M7 15h4l-2 2z" fill="#5f5f5f"/><circle cx="13" cy="3.5" r="3" fill="#0696d7"/></svg>
<svg style="position:absolute;left:1853px;top:31px" width="18" height="18"><circle cx="9" cy="9" r="8" fill="#5f5f5f"/><path d="M6.3 7.2q0-3 2.7-3t2.7 2.6q0 1.5-1.7 2.4q-1 .6-1 1.8v.6" fill="none" stroke="#fff" stroke-width="1.8"/><circle cx="9" cy="13.6" r="1.1" fill="#fff"/></svg>
<svg style="position:absolute;left:1891px;top:27px" width="24" height="24"><defs><linearGradient id="av" x1="0" y1="0" x2="0" y2="1"><stop offset="0" stop-color="#a9b6c7"/><stop offset="1" stop-color="#7d8ea6"/></linearGradient><clipPath id="avc"><circle cx="12" cy="12" r="12"/></clipPath></defs><circle cx="12" cy="12" r="12" fill="url(#av)"/><g clip-path="url(#avc)" fill="#4f5f78"><ellipse cx="12" cy="9" rx="5" ry="6"/><path d="M2 24q1-8 10-8t10 8z"/></g></svg>

<div style="position:absolute;left:8px;top:55px;width:1920px;height:82px;background:#f1f1f1;border-bottom:1px solid #dadada;box-sizing:border-box"></div>
<div style="position:absolute;left:20px;top:66px;width:108px;height:59px;border:1px solid #d3d3d3;border-radius:5px;box-sizing:border-box"></div>
<div style="position:absolute;left:52px;top:89px;font-family:'Liberation Sans',sans-serif;font-size:11px;color:#222;white-space:nowrap;letter-spacing:1px">デザイン</div>
<svg style="position:absolute;left:92px;top:94px" width="8" height="5" viewBox="0 0 8 5"><path d="M0 0h7l-3.5 4.5z" fill="#333"/></svg>
<div style="position:absolute;left:114px;width:120px;text-align:center;top:61px;font-family:'Liberation Sans',sans-serif;font-size:11px;color:#0696d7;white-space:nowrap;letter-spacing:1px">ソリッド</div>
<div style="position:absolute;left:196px;width:120px;text-align:center;top:61px;font-family:'Liberation Sans',sans-serif;font-size:11px;color:#333;white-space:nowrap;letter-spacing:1px">サーフェス</div>
<div style="position:absolute;left:274px;width:120px;text-align:center;top:61px;font-family:'Liberation Sans',sans-serif;font-size:11px;color:#333;white-space:nowrap;letter-spacing:1px">メッシュ</div>
<div style="position:absolute;left:352px;width:120px;text-align:center;top:61px;font-family:'Liberation Sans',sans-serif;font-size:11px;color:#333;white-space:nowrap;letter-spacing:1px">フォーム</div>
<div style="position:absolute;left:440px;width:120px;text-align:center;top:61px;font-family:'Liberation Sans',sans-serif;font-size:11px;color:#333;white-space:nowrap;letter-spacing:1px">シート メタル</div>
<div style="position:absolute;left:536px;width:120px;text-align:center;top:61px;font-family:'Liberation Sans',sans-serif;font-size:11px;color:#333;white-space:nowrap;letter-spacing:1px">プラスチック</div>
<div style="position:absolute;left:633px;width:120px;text-align:center;top:61px;font-family:'Liberation Sans',sans-serif;font-size:11px;color:#333;white-space:nowrap;letter-spacing:1px">ユーティリティ</div>
<div style="position:absolute;left:146px;top:75px;width:56px;height:3px;background:#0696d7"></div>
<div style="position:absolute;left:358px;top:81px;width:2px;height:51px;background:#dedede"></div>
<div style="position:absolute;left:627px;top:81px;width:2px;height:51px;background:#dedede"></div>
<div style="position:absolute;left:725px;top:81px;width:2px;height:51px;background:#dedede"></div>
<div style="position:absolute;left:849px;top:81px;width:2px;height:51px;background:#dedede"></div>
<div style="position:absolute;left:908px;top:81px;width:2px;height:51px;background:#dedede"></div>
<div style="position:absolute;left:967px;top:81px;width:2px;height:51px;background:#dedede"></div>
<div style="position:absolute;left:1025px;top:81px;width:2px;height:51px;background:#dedede"></div>
<div style="position:absolute;left:163px;width:160px;text-align:center;top:121px;font-family:'Liberation Sans',sans-serif;font-size:11px;color:#333;white-space:nowrap;letter-spacing:1px">作成 <svg width="7" height="5" style="vertical-align:1px"><path d="M0 0h7l-3.5 4.5z" fill="#333"/></svg></div>
<div style="position:absolute;left:410px;width:160px;text-align:center;top:121px;font-family:'Liberation Sans',sans-serif;font-size:11px;color:#333;white-space:nowrap;letter-spacing:1px">修正 <svg width="7" height="5" style="vertical-align:1px"><path d="M0 0h7l-3.5 4.5z" fill="#333"/></svg></div>
<div style="position:absolute;left:594px;width:160px;text-align:center;top:121px;font-family:'Liberation Sans',sans-serif;font-size:11px;color:#333;white-space:nowrap;letter-spacing:1px">アセンブリ <svg width="7" height="5" style="vertical-align:1px"><path d="M0 0h7l-3.5 4.5z" fill="#333"/></svg></div>
<div style="position:absolute;left:705px;width:160px;text-align:center;top:121px;font-family:'Liberation Sans',sans-serif;font-size:11px;color:#333;white-space:nowrap;letter-spacing:1px">コンフィギュレーション <svg width="7" height="5" style="vertical-align:1px"><path d="M0 0h7l-3.5 4.5z" fill="#333"/></svg></div>
<div style="position:absolute;left:799px;width:160px;text-align:center;top:121px;font-family:'Liberation Sans',sans-serif;font-size:11px;color:#333;white-space:nowrap;letter-spacing:1px">構築 <svg width="7" height="5" style="vertical-align:1px"><path d="M0 0h7l-3.5 4.5z" fill="#333"/></svg></div>
<div style="position:absolute;left:857px;width:160px;text-align:center;top:121px;font-family:'Liberation Sans',sans-serif;font-size:11px;color:#333;white-space:nowrap;letter-spacing:1px">検査 <svg width="7" height="5" style="vertical-align:1px"><path d="M0 0h7l-3.5 4.5z" fill="#333"/></svg></div>
<div style="position:absolute;left:916px;width:160px;text-align:center;top:121px;font-family:'Liberation Sans',sans-serif;font-size:11px;color:#333;white-space:nowrap;letter-spacing:1px">挿入 <svg width="7" height="5" style="vertical-align:1px"><path d="M0 0h7l-3.5 4.5z" fill="#333"/></svg></div>
<div style="position:absolute;left:974px;width:160px;text-align:center;top:121px;font-family:'Liberation Sans',sans-serif;font-size:11px;color:#333;white-space:nowrap;letter-spacing:1px">選択 <svg width="7" height="5" style="vertical-align:1px"><path d="M0 0h7l-3.5 4.5z" fill="#333"/></svg></div>
<svg style="position:absolute;left:145px;top:82px" width="33" height="32" viewBox="0 0 33 32"><g fill="#444"><rect x="0.5" y="0.5" width="3" height="3"/><rect x="28.5" y="0.5" width="3" height="3"/><rect x="0.5" y="28.5" width="3" height="3"/><rect x="7" y="7" width="3" height="3"/><rect x="20" y="7" width="3" height="3"/><rect x="7" y="18.5" width="3" height="3"/></g><path d="M4 2h24.5M2 4v24.5M4 30h14M30 4v14M10 8.5h10M8.5 10v8.5M11 19.5q9-2 10.5-9" fill="none" stroke="#555" stroke-width="1"/><path d="M24 20v12M18 26h12" stroke="#1fa83a" stroke-width="3.5"/></svg>
<svg style="position:absolute;left:189px;top:82px" width="31" height="32" viewBox="0 0 31 32"><path d="M0 30.5v-3l2-2h18l-2 5z" fill="#b8b8b8"/><path d="M0 26V7l5-4h18v18l-3 5z" fill="#6ab0e6"/><path d="M0 7l5-4h18l-5 4z" fill="#8fcbf7"/><path d="M18 7l5-4v18l-5 5z" fill="#4391cf"/><path d="M18 26l5-5v3l-5 5z" fill="#b8b8b8"/><path d="M27.5 27V5" stroke="#222" stroke-width="1.3"/><path d="M25 8l2.5-4 2.5 4z" fill="#222"/></svg>
<svg style="position:absolute;left:231px;top:82px" width="33" height="31" viewBox="0 0 33 31"><path d="M2 16q14-8 28 0v12l-3 3q-12-7-24 0l-3-4z" fill="#6ab0e6"/><path d="M2 16q14-8 28 0l-4 4q-10-6-21 0z" fill="#8fcbf7"/><path d="M2 16l3 4v11l-3-4z" fill="#4391cf"/><path d="M25 21l5-4v10l-4 4z" fill="#fff" stroke="#333" stroke-width="1"/><path d="M4 7q12-7 25 0" fill="none" stroke="#222" stroke-width="1"/><path d="M1 8l5-3 0 4z" fill="#222"/></svg>
<svg style="position:absolute;left:274px;top:82px" width="33" height="32" viewBox="0 0 33 32"><path d="M0.5 8l6-7h25.5v24l-7 7H.5z" fill="#dcdcdc" stroke="#555" stroke-width="1"/><path d="M25 8l7-7v24l-7 7z" fill="#b8b8b8"/><circle cx="13" cy="17.5" r="8" fill="none" stroke="#444" stroke-width="1"/><path d="M7.5 17.5a6 6 0 1 0 11 -4a6 6 0 0 1-9-3z" fill="#6ab0e6"/></svg>
<svg style="position:absolute;left:317px;top:82px" width="29" height="31" viewBox="0 0 29 31"><rect x="1" y="3" width="6" height="6" fill="#fff" stroke="#444"/><rect x="21" y="2.5" width="7" height="7" fill="#6ab0e6"/><rect x="1" y="23" width="7" height="7" fill="#6ab0e6"/><rect x="21" y="23" width="7" height="7" fill="#6ab0e6"/><path d="M8 6h12M4.5 10v12M9 26.5h11" stroke="#444" stroke-width="1"/></svg>
<svg style="position:absolute;left:372px;top:82px" width="30" height="32" viewBox="0 0 30 32"><path d="M0.5 31.5V7l5-6h3v30.5z" fill="#dcdcdc" stroke="#555"/><path d="M7 31.5V7l6-6h9v24l-7 6.5z" fill="#6ab0e6"/><path d="M7 7l6-6h9l-6 6z" fill="#8fcbf7"/><path d="M16 7l6-6v24l-6 6.5z" fill="#4391cf"/><path d="M20 15h8" stroke="#222" stroke-width="1.3"/><path d="M26 12l4 3-4 3z" fill="#222"/></svg>
<svg style="position:absolute;left:414px;top:82px" width="33" height="32" viewBox="0 0 33 32"><path d="M0.5 31.5V9l7-8h11q11 1 13 14v10l-7 6.5z" fill="#dcdcdc" stroke="#555"/><path d="M24 31.5l8-7V15l-8 7z" fill="#b8b8b8"/><path d="M12 6l5-5q13 1 15 14l-5 5q-2-12-15-14z" fill="#6ab0e6"/></svg>
<svg style="position:absolute;left:457px;top:82px" width="33" height="32" viewBox="0 0 33 32"><path d="M.5 9l7-8h24.5v24l-7 6.5H.5z" fill="#f4f4f4" stroke="#555"/><path d="M25 31.5V9l7-8v24z" fill="#b8b8b8"/><rect x="3" y="11" width="20" height="18" fill="#dcdcdc"/><rect x="5" y="12" width="16" height="15" fill="#f4f4f4"/><path d="M5 12h8v9h8v6H5z" fill="#4391cf"/><path d="M13 21h8v6H5z" fill="#8fcbf7"/></svg>
<svg style="position:absolute;left:500px;top:82px" width="33" height="32" viewBox="0 0 33 32"><path d="M0 31.5V13l4-3h10V4l4-3h14v18l-4 4h-4v8.5l-4 0z" fill="#6ab0e6"/><path d="M14 4l4-3h14l-4 3z" fill="#8fcbf7"/><path d="M0 13l4-3h10l-4 3z" fill="#8fcbf7"/><path d="M28 4l4-3v18l-4 4z" fill="#4391cf"/><path d="M18 23h4v8.5l-4 0z" fill="#4391cf"/></svg>
<svg style="position:absolute;left:543px;top:82px" width="33" height="32" viewBox="0 0 33 32"><path d="M.5 6l4-4h23v15l-4 3H.5z" fill="#6ab0e6"/><path d="M.5 6l4-4h23l-4 4z" fill="#8fcbf7"/><path d="M23.5 6l4-4v15l-4 3z" fill="#4391cf"/><path d="M.5 19h23l8-6" fill="none" stroke="#2a8ee6" stroke-width="1.3"/><path d="M.5 22h23l4-3v9.5l-4 3H.5z" fill="#dcdcdc" stroke="#555"/><path d="M23.5 22l4-3v9.5l-4 3z" fill="#b8b8b8"/></svg>
<svg style="position:absolute;left:586px;top:82px" width="32" height="32" viewBox="0 0 32 32"><path d="M16 2v28M2 16h28" stroke="#333" stroke-width="2.2"/><path d="M16 0l-5 6h10zM16 32l-5-6h10zM0 16l6-5v10zM32 16l-6-5v10z" fill="#333"/></svg>
<svg style="position:absolute;left:639px;top:82px" width="33" height="32" viewBox="0 0 33 32"><path d="M.5 31.5V16h12l4-4h8v15l-4 4.5z" fill="#dcdcdc" stroke="#555"/><path d="M12.5 16v15.5" stroke="#555"/><path d="M20.5 16l4-4v15l-4 4.5z" fill="#b8b8b8"/><path d="M.5 16V5l3-3h8v11l-3 3z" fill="#6ab0e6"/><path d="M.5 5l3-3h8l-3 3z" fill="#8fcbf7"/><path d="M8.5 5l3-3v11l-3 3z" fill="#4391cf"/><path d="M22 0l1.5 4.5 4-2-1.5 4 4.5 1.5-4.5 1.5 1.5 4-4-2L22 16l-1.5-4.5-4 2 1.5-4-4.5-1.5 4.5-1.5-1.5-4 4 2z" fill="#f5a30a"/></svg>
<svg style="position:absolute;left:685px;top:82px" width="29" height="32" viewBox="0 0 29 32"><path d="M1 28V9l6-6q3-2 6 0v17l-7 8z" fill="#dcdcdc" stroke="#555"/><path d="M15 25v-8l3-3 10 9v7l-3 2-10-9z" fill="#dcdcdc" stroke="#555"/><path d="M28 23v7" stroke="#555"/><path d="M18 14V3l10 9v11z" fill="#e2e2e2" stroke="#555"/><path d="M9 16v6M19.5 7v6" stroke="#2a8ee6" stroke-width="1"/></svg>
<svg style="position:absolute;left:750px;top:82px" width="33" height="32" viewBox="0 0 33 32"><path d="M.5 29V8l6-6h19v27z" fill="#f0f0f0" stroke="#dadada"/><path d="M18 22h12M18 27.5h12M22.5 20v4M25 25.5v4" stroke="#d0d0d0" stroke-width="1.3"/><circle cx="24" cy="8" r="8" fill="#b3dbef"/><path d="M22 6v7M18.5 9.5h7M26.5 4v3.5M24.7 5.7h3.6" stroke="#eaf5fb" stroke-width="1.4"/></svg>
<svg style="position:absolute;left:793px;top:82px" width="33" height="32" viewBox="0 0 33 32"><rect x="0.5" y="0.5" width="28" height="28" fill="#f0f0f0" stroke="#dadada"/><path d="M.5 6h28M.5 13h20M.5 20h16M.5 27h16M6 6v22M13 6v22M20 6v14" stroke="#d6d6d6" stroke-width="1"/><path d="M18 22h12M18 27.5h12M22.5 20v4M25 25.5v4" stroke="#d0d0d0" stroke-width="1.3"/><circle cx="24" cy="8" r="8" fill="#b3dbef"/><path d="M22 6v7M18.5 9.5h7M26.5 4v3.5M24.7 5.7h3.6" stroke="#eaf5fb" stroke-width="1.4"/></svg>
<svg style="position:absolute;left:864px;top:82px" width="31" height="32" viewBox="0 0 31 32"><path d="M.5 31V9l8-8h2v30z" fill="#dcdcdc" stroke="#555"/><path d="M10 31V9l8-8v22z" fill="#5bbf76"/><path d="M23 31V12l7-8v19z" fill="#e6986a"/></svg>
<svg style="position:absolute;left:924px;top:89px" width="29" height="18" viewBox="0 0 29 18"><path d="M.7 0v9M28.3 0v9M2 5h25" stroke="#555" stroke-width="1.2"/><path d="M1.5 5l4-2.5v5zM27.5 5l-4-2.5v5z" fill="#555"/><rect x="0" y="10.5" width="29" height="6.5" fill="#f5a30a"/><path d="M3 10.5v2M6.5 10.5v2M10 10.5v2M13.5 10.5v2M17 10.5v2M20.5 10.5v2M24 10.5v2" stroke="#7a5200" stroke-width="0.8"/></svg>
<svg style="position:absolute;left:982px;top:83px" width="30" height="30" viewBox="0 0 30 30"><rect x="0" y="0" width="29" height="29" fill="#4c9fdc"/><rect x="0" y="0" width="29" height="29" fill="#8dcbf5"/><path d="M0 22q4-9 9-10t8 6q3-4 6-3t6 6v8H0z" fill="#4b9bd6"/><circle cx="21" cy="8" r="3.2" fill="#f8f2c0"/></svg>
<svg style="position:absolute;left:1037px;top:79px" width="39" height="38" viewBox="0 0 39 38"><rect x="0" y="0" width="38" height="38" fill="#0696d7"/><rect x="3" y="3.5" width="27" height="22" fill="none" stroke="#8fe08a" stroke-width="1" stroke-dasharray="3 2"/><path d="M23 18v17l4-4 3 6 3-1.5-3-6h5z" fill="#fff"/></svg>
<div style="position:absolute;left:12px;top:144px;width:300px;height:24px;background:#f1f1f1;border:1px solid #cfcfcf;box-sizing:border-box"></div>
<svg style="position:absolute;left:17px;top:152px" width="12" height="8"><path d="M5 0v8L0 4zM11 0v8L6 4z" fill="#222"/></svg>
<div style="position:absolute;left:37px;top:150px;font-family:'Liberation Sans',sans-serif;font-size:11px;color:#555;letter-spacing:1px;white-space:nowrap">ブラウザ</div>
<svg style="position:absolute;left:290px;top:151px" width="10" height="10"><circle cx="5" cy="5" r="5" fill="#222"/><path d="M2 5h6" stroke="#fff" stroke-width="1.6"/></svg>
<div style="position:absolute;left:16px;top:175px;width:6px;height:290px;background:#9c9c9c;border-radius:3px"></div>
<div style="position:absolute;left:16px;top:462px;width:6px;height:646px;background:#c8c8ca"></div>
<svg style="position:absolute;left:29px;top:177px" width="12" height="14"><defs><linearGradient id="eg184" x1="0" x2="1" y1="0" y2="1"><stop offset="0" stop-color="#eee"/><stop offset="1" stop-color="#555"/></linearGradient></defs><path d="M1 12.5L10.5 2v10.5z" fill="url(#eg184)" stroke="#222" stroke-width="1"/></svg>
<div style="position:absolute;left:48px;top:174px;width:156px;height:20px;background:#f1f1f1"></div>
<svg style="position:absolute;left:51px;top:178px" width="16" height="12"><path d="M1 6q6-7 14 0q-6 7-14 0z" fill="none" stroke="#8d8d8d" stroke-width="1.6"/><circle cx="8" cy="6" r="2.4" fill="#8d8d8d"/></svg>
<div style="position:absolute;left:73px;top:176px;width:106px;height:16px;background:#999"></div>
<svg style="position:absolute;left:75px;top:176px" width="16" height="16"><path d="M1.5 5l3-3.5h10v11l-3 3h-10z" fill="#e6e8ee" stroke="#333" stroke-width="1"/><path d="M1.5 5h10v10.5M11.5 5l3-3.5" fill="none" stroke="#333" stroke-width="0.8"/></svg>
<div style="position:absolute;left:106px;top:178px;font-family:'Liberation Sans',sans-serif;font-size:11px;font-weight:bold;color:#fff;white-space:nowrap">ML-G10 v11</div>
<svg style="position:absolute;left:182px;top:176px" width="16" height="16"><circle cx="8" cy="8" r="6.3" fill="#fff" stroke="#222" stroke-width="1.3"/><circle cx="8" cy="8" r="2.6" fill="#222"/></svg>
<div style="position:absolute;left:66px;top:198px;width:118px;height:20px;background:#f1f1f1"></div>
<svg style="position:absolute;left:46px;top:200px" width="12" height="16"><path d="M2 1.5l8 6.5-8 6.5z" fill="#fff" stroke="#222" stroke-width="1.3"/></svg>
<svg style="position:absolute;left:67px;top:200px" width="16" height="16"><g fill="#777"><circle cx="8" cy="8" r="5.3"/><rect x="6.5" y="0.5" width="3" height="15"/><rect x="0.5" y="6.5" width="15" height="3"/><rect x="6.5" y="0.5" width="3" height="15" transform="rotate(45 8 8)"/><rect x="6.5" y="0.5" width="3" height="15" transform="rotate(-45 8 8)"/></g><circle cx="8" cy="8" r="2.2" fill="#f1f1f1"/></svg>
<div style="position:absolute;left:95px;top:202px;font-family:'Liberation Sans',sans-serif;font-size:11px;color:#333;white-space:nowrap;letter-spacing:0.5px">ドキュメントの設定</div>
<div style="position:absolute;left:66px;top:222px;width:126px;height:20px;background:#f1f1f1"></div>
<svg style="position:absolute;left:46px;top:224px" width="12" height="16"><path d="M2 1.5l8 6.5-8 6.5z" fill="#fff" stroke="#222" stroke-width="1.3"/></svg>
<svg style="position:absolute;left:69px;top:225px" width="17" height="14"><path d="M0 1h6l2 2h9v11H0z" fill="#8f8f8f"/><path d="M0 4h17" stroke="#f1f1f1" stroke-width="0.8"/></svg>
<div style="position:absolute;left:99px;top:226px;font-family:'Liberation Sans',sans-serif;font-size:11px;color:#333;white-space:nowrap;letter-spacing:0.5px">名前の付いたビュー</div>
<div style="position:absolute;left:66px;top:246px;width:91px;height:20px;background:#f1f1f1"></div>
<svg style="position:absolute;left:46px;top:248px" width="12" height="16"><path d="M2 1.5l8 6.5-8 6.5z" fill="#fff" stroke="#222" stroke-width="1.3"/></svg>
<svg style="position:absolute;left:69px;top:250px" width="16" height="12"><path d="M1 6q6-7 14 0q-6 7-14 0z" fill="none" stroke="#b0b0b0" stroke-width="1.2"/><circle cx="8" cy="6" r="2.2" fill="none" stroke="#b0b0b0"/><path d="M3 11L13 1" stroke="#b0b0b0" stroke-width="1.2"/></svg>
<svg style="position:absolute;left:93px;top:249px" width="17" height="14"><path d="M0 1h6l2 2h9v11H0z" fill="#8f8f8f"/><path d="M0 4h17" stroke="#f1f1f1" stroke-width="0.8"/></svg>
<div style="position:absolute;left:124px;top:250px;font-family:'Liberation Sans',sans-serif;font-size:11px;color:#333;white-space:nowrap;letter-spacing:0.5px">原点</div>
<div style="position:absolute;left:66px;top:270px;width:95px;height:20px;background:#f1f1f1"></div>
<svg style="position:absolute;left:46px;top:273px" width="12" height="14"><defs><linearGradient id="eg280" x1="0" x2="1" y1="0" y2="1"><stop offset="0" stop-color="#eee"/><stop offset="1" stop-color="#555"/></linearGradient></defs><path d="M1 12.5L10.5 2v10.5z" fill="url(#eg280)" stroke="#222" stroke-width="1"/></svg>
<svg style="position:absolute;left:69px;top:274px" width="16" height="12"><path d="M1 6q6-7 14 0q-6 7-14 0z" fill="none" stroke="#8d8d8d" stroke-width="1.6"/><circle cx="8" cy="6" r="2.4" fill="#8d8d8d"/></svg>
<svg style="position:absolute;left:93px;top:273px" width="17" height="14"><path d="M0 1h6l2 2h9v11H0z" fill="#8f8f8f"/><path d="M0 4h17" stroke="#f1f1f1" stroke-width="0.8"/></svg>
<div style="position:absolute;left:124px;top:274px;font-family:'Liberation Sans',sans-serif;font-size:11px;color:#333;white-space:nowrap;letter-spacing:0.5px">ボディ</div>
<div style="position:absolute;left:84px;top:294px;width:102px;height:20px;background:#f1f1f1"></div>
<svg style="position:absolute;left:87px;top:298px" width="16" height="12"><path d="M1 6q6-7 14 0q-6 7-14 0z" fill="none" stroke="#8d8d8d" stroke-width="1.6"/><circle cx="8" cy="6" r="2.4" fill="#8d8d8d"/></svg>
<svg style="position:absolute;left:112px;top:297px" width="17" height="14"><path d="M0 1h6l2 2h9v11H0z" fill="#8f8f8f"/><path d="M0 4h17" stroke="#f1f1f1" stroke-width="0.8"/></svg>
<div style="position:absolute;left:141px;top:298px;font-family:'Liberation Sans',sans-serif;font-size:11px;color:#333;white-space:nowrap;letter-spacing:0.5px">グループ1</div>
<div style="position:absolute;left:84px;top:318px;width:122px;height:20px;background:#f1f1f1"></div>
<svg style="position:absolute;left:87px;top:322px" width="16" height="12"><path d="M1 6q6-7 14 0q-6 7-14 0z" fill="none" stroke="#8d8d8d" stroke-width="1.6"/><circle cx="8" cy="6" r="2.4" fill="#8d8d8d"/></svg>
<svg style="position:absolute;left:112px;top:320px" width="16" height="17"><defs><linearGradient id="bg120328" x1="0" x2="1"><stop offset="0" stop-color="#fff"/><stop offset="1" stop-color="#c9ccd2"/></linearGradient></defs><path d="M1.5 3q0-2 6.5-2t6.5 2v11q0 2-6.5 2t-6.5-2z" fill="url(#bg120328)" stroke="#333" stroke-width="1"/><path d="M1.5 3q0 2 6.5 2t6.5-2" fill="none" stroke="#333" stroke-width="0.8"/></svg>
<div style="position:absolute;left:141px;top:322px;font-family:'Liberation Sans',sans-serif;font-size:11px;color:#333;white-space:nowrap;letter-spacing:0.5px">キーボード (1)</div>
<div style="position:absolute;left:84px;top:342px;width:142px;height:20px;background:#f1f1f1"></div>
<svg style="position:absolute;left:87px;top:346px" width="16" height="12"><path d="M1 6q6-7 14 0q-6 7-14 0z" fill="none" stroke="#8d8d8d" stroke-width="1.6"/><circle cx="8" cy="6" r="2.4" fill="#8d8d8d"/></svg>
<svg style="position:absolute;left:112px;top:344px" width="16" height="17"><defs><linearGradient id="bg120352" x1="0" x2="1"><stop offset="0" stop-color="#fff"/><stop offset="1" stop-color="#c9ccd2"/></linearGradient></defs><path d="M1.5 3q0-2 6.5-2t6.5 2v11q0 2-6.5 2t-6.5-2z" fill="url(#bg120352)" stroke="#333" stroke-width="1"/><path d="M1.5 3q0 2 6.5 2t6.5-2" fill="none" stroke="#333" stroke-width="0.8"/></svg>
<div style="position:absolute;left:141px;top:346px;font-family:'Liberation Sans',sans-serif;font-size:11px;color:#333;white-space:nowrap;letter-spacing:0.5px">ボディ・上面手前</div>
<div style="position:absolute;left:84px;top:366px;width:130px;height:20px;background:#f1f1f1"></div>
<svg style="position:absolute;left:87px;top:370px" width="16" height="12"><path d="M1 6q6-7 14 0q-6 7-14 0z" fill="none" stroke="#8d8d8d" stroke-width="1.6"/><circle cx="8" cy="6" r="2.4" fill="#8d8d8d"/></svg>
<svg style="position:absolute;left:112px;top:368px" width="16" height="17"><defs><linearGradient id="bg120376" x1="0" x2="1"><stop offset="0" stop-color="#fff"/><stop offset="1" stop-color="#c9ccd2"/></linearGradient></defs><path d="M1.5 3q0-2 6.5-2t6.5 2v11q0 2-6.5 2t-6.5-2z" fill="url(#bg120376)" stroke="#333" stroke-width="1"/><path d="M1.5 3q0 2 6.5 2t6.5-2" fill="none" stroke="#333" stroke-width="0.8"/></svg>
<div style="position:absolute;left:141px;top:370px;font-family:'Liberation Sans',sans-serif;font-size:11px;color:#333;white-space:nowrap;letter-spacing:0.5px">ボディ1・底面</div>
<div style="position:absolute;left:84px;top:390px;width:102px;height:20px;background:#f1f1f1"></div>
<svg style="position:absolute;left:87px;top:394px" width="16" height="12"><path d="M1 6q6-7 14 0q-6 7-14 0z" fill="none" stroke="#8d8d8d" stroke-width="1.6"/><circle cx="8" cy="6" r="2.4" fill="#8d8d8d"/></svg>
<svg style="position:absolute;left:112px;top:392px" width="16" height="17"><defs><linearGradient id="bg120400" x1="0" x2="1"><stop offset="0" stop-color="#fff"/><stop offset="1" stop-color="#c9ccd2"/></linearGradient></defs><path d="M1.5 3q0-2 6.5-2t6.5 2v11q0 2-6.5 2t-6.5-2z" fill="url(#bg120400)" stroke="#333" stroke-width="1"/><path d="M1.5 3q0 2 6.5 2t6.5-2" fill="none" stroke="#333" stroke-width="0.8"/></svg>
<div style="position:absolute;left:141px;top:394px;font-family:'Liberation Sans',sans-serif;font-size:11px;color:#333;white-space:nowrap;letter-spacing:0.5px">LED (1)</div>
<div style="position:absolute;left:84px;top:414px;width:170px;height:20px;background:#f1f1f1"></div>
<svg style="position:absolute;left:87px;top:418px" width="16" height="12"><path d="M1 6q6-7 14 0q-6 7-14 0z" fill="none" stroke="#8d8d8d" stroke-width="1.6"/><circle cx="8" cy="6" r="2.4" fill="#8d8d8d"/></svg>
<svg style="position:absolute;left:112px;top:416px" width="16" height="17"><defs><linearGradient id="bg120424" x1="0" x2="1"><stop offset="0" stop-color="#fff"/><stop offset="1" stop-color="#c9ccd2"/></linearGradient></defs><path d="M1.5 3q0-2 6.5-2t6.5 2v11q0 2-6.5 2t-6.5-2z" fill="url(#bg120424)" stroke="#333" stroke-width="1"/><path d="M1.5 3q0 2 6.5 2t6.5-2" fill="none" stroke="#333" stroke-width="0.8"/></svg>
<div style="position:absolute;left:141px;top:418px;font-family:'Liberation Sans',sans-serif;font-size:11px;color:#333;white-space:nowrap;letter-spacing:0.5px">ジョイスティックポート (1)</div>
<div style="position:absolute;left:84px;top:438px;width:138px;height:20px;background:#f1f1f1"></div>
<svg style="position:absolute;left:87px;top:442px" width="16" height="12"><path d="M1 6q6-7 14 0q-6 7-14 0z" fill="none" stroke="#8d8d8d" stroke-width="1.6"/><circle cx="8" cy="6" r="2.4" fill="#8d8d8d"/></svg>
<svg style="position:absolute;left:112px;top:440px" width="16" height="17"><defs><linearGradient id="bg120448" x1="0" x2="1"><stop offset="0" stop-color="#fff"/><stop offset="1" stop-color="#c9ccd2"/></linearGradient></defs><path d="M1.5 3q0-2 6.5-2t6.5 2v11q0 2-6.5 2t-6.5-2z" fill="url(#bg120448)" stroke="#333" stroke-width="1"/><path d="M1.5 3q0 2 6.5 2t6.5-2" fill="none" stroke="#333" stroke-width="0.8"/></svg>
<div style="position:absolute;left:141px;top:442px;font-family:'Liberation Sans',sans-serif;font-size:11px;color:#333;white-space:nowrap;letter-spacing:0.5px">内部フレーム (1)</div>
<div style="position:absolute;left:84px;top:462px;width:166px;height:20px;background:#f1f1f1"></div>
<svg style="position:absolute;left:87px;top:466px" width="16" height="12"><path d="M1 6q6-7 14 0q-6 7-14 0z" fill="none" stroke="#8d8d8d" stroke-width="1.6"/><circle cx="8" cy="6" r="2.4" fill="#8d8d8d"/></svg>
<svg style="position:absolute;left:112px;top:464px" width="16" height="17"><defs><linearGradient id="bg120472" x1="0" x2="1"><stop offset="0" stop-color="#fff"/><stop offset="1" stop-color="#c9ccd2"/></linearGradient></defs><path d="M1.5 3q0-2 6.5-2t6.5 2v11q0 2-6.5 2t-6.5-2z" fill="url(#bg120472)" stroke="#333" stroke-width="1"/><path d="M1.5 3q0 2 6.5 2t6.5-2" fill="none" stroke="#333" stroke-width="0.8"/></svg>
<div style="position:absolute;left:141px;top:466px;font-family:'Liberation Sans',sans-serif;font-size:11px;color:#333;white-space:nowrap;letter-spacing:0.5px">カートリッジ・蓋 (1) (1)</div>
<div style="position:absolute;left:84px;top:486px;width:130px;height:20px;background:#f1f1f1"></div>
<svg style="position:absolute;left:87px;top:490px" width="16" height="12"><path d="M1 6q6-7 14 0q-6 7-14 0z" fill="none" stroke="#8d8d8d" stroke-width="1.6"/><circle cx="8" cy="6" r="2.4" fill="#8d8d8d"/></svg>
<svg style="position:absolute;left:112px;top:488px" width="16" height="17"><defs><linearGradient id="bg120496" x1="0" x2="1"><stop offset="0" stop-color="#fff"/><stop offset="1" stop-color="#c9ccd2"/></linearGradient></defs><path d="M1.5 3q0-2 6.5-2t6.5 2v11q0 2-6.5 2t-6.5-2z" fill="url(#bg120496)" stroke="#333" stroke-width="1"/><path d="M1.5 3q0 2 6.5 2t6.5-2" fill="none" stroke="#333" stroke-width="0.8"/></svg>
<div style="position:absolute;left:141px;top:490px;font-family:'Liberation Sans',sans-serif;font-size:11px;color:#333;white-space:nowrap;letter-spacing:0.5px">ボディ・上面奥</div>
<div style="position:absolute;left:84px;top:510px;width:146px;height:20px;background:#f1f1f1"></div>
<svg style="position:absolute;left:87px;top:514px" width="16" height="12"><path d="M1 6q6-7 14 0q-6 7-14 0z" fill="none" stroke="#8d8d8d" stroke-width="1.6"/><circle cx="8" cy="6" r="2.4" fill="#8d8d8d"/></svg>
<svg style="position:absolute;left:112px;top:512px" width="16" height="17"><defs><linearGradient id="bg120520" x1="0" x2="1"><stop offset="0" stop-color="#fff"/><stop offset="1" stop-color="#c9ccd2"/></linearGradient></defs><path d="M1.5 3q0-2 6.5-2t6.5 2v11q0 2-6.5 2t-6.5-2z" fill="url(#bg120520)" stroke="#333" stroke-width="1"/><path d="M1.5 3q0 2 6.5 2t6.5-2" fill="none" stroke="#333" stroke-width="0.8"/></svg>
<div style="position:absolute;left:141px;top:514px;font-family:'Liberation Sans',sans-serif;font-size:11px;color:#333;white-space:nowrap;letter-spacing:0.5px">カートリッジフレーム</div>
<div style="position:absolute;left:84px;top:534px;width:146px;height:20px;background:#f1f1f1"></div>
<svg style="position:absolute;left:87px;top:538px" width="16" height="12"><path d="M1 6q6-7 14 0q-6 7-14 0z" fill="none" stroke="#8d8d8d" stroke-width="1.6"/><circle cx="8" cy="6" r="2.4" fill="#8d8d8d"/></svg>
<svg style="position:absolute;left:112px;top:536px" width="16" height="17"><defs><linearGradient id="bg120544" x1="0" x2="1"><stop offset="0" stop-color="#fff"/><stop offset="1" stop-color="#c9ccd2"/></linearGradient></defs><path d="M1.5 3q0-2 6.5-2t6.5 2v11q0 2-6.5 2t-6.5-2z" fill="url(#bg120544)" stroke="#333" stroke-width="1"/><path d="M1.5 3q0 2 6.5 2t6.5-2" fill="none" stroke="#333" stroke-width="0.8"/></svg>
<div style="position:absolute;left:141px;top:538px;font-family:'Liberation Sans',sans-serif;font-size:11px;color:#333;white-space:nowrap;letter-spacing:0.5px">電源スイッチ枠 (1)</div>
<div style="position:absolute;left:84px;top:558px;width:138px;height:20px;background:#f1f1f1"></div>
<svg style="position:absolute;left:87px;top:562px" width="16" height="12"><path d="M1 6q6-7 14 0q-6 7-14 0z" fill="none" stroke="#8d8d8d" stroke-width="1.6"/><circle cx="8" cy="6" r="2.4" fill="#8d8d8d"/></svg>
<svg style="position:absolute;left:112px;top:560px" width="16" height="17"><defs><linearGradient id="bg120568" x1="0" x2="1"><stop offset="0" stop-color="#fff"/><stop offset="1" stop-color="#c9ccd2"/></linearGradient></defs><path d="M1.5 3q0-2 6.5-2t6.5 2v11q0 2-6.5 2t-6.5-2z" fill="url(#bg120568)" stroke="#333" stroke-width="1"/><path d="M1.5 3q0 2 6.5 2t6.5-2" fill="none" stroke="#333" stroke-width="0.8"/></svg>
<div style="position:absolute;left:141px;top:562px;font-family:'Liberation Sans',sans-serif;font-size:11px;color:#333;white-space:nowrap;letter-spacing:0.5px">電源スイッチ (1)</div>
<div style="position:absolute;left:66px;top:582px;width:110px;height:20px;background:#f1f1f1"></div>
<svg style="position:absolute;left:46px;top:584px" width="12" height="16"><path d="M2 1.5l8 6.5-8 6.5z" fill="#fff" stroke="#222" stroke-width="1.3"/></svg>
<svg style="position:absolute;left:69px;top:586px" width="16" height="12"><path d="M1 6q6-7 14 0q-6 7-14 0z" fill="none" stroke="#8d8d8d" stroke-width="1.6"/><circle cx="8" cy="6" r="2.4" fill="#8d8d8d"/></svg>
<svg style="position:absolute;left:93px;top:585px" width="17" height="14"><path d="M0 1h6l2 2h9v11H0z" fill="#8f8f8f"/><path d="M0 4h17" stroke="#f1f1f1" stroke-width="0.8"/></svg>
<div style="position:absolute;left:124px;top:586px;font-family:'Liberation Sans',sans-serif;font-size:11px;color:#333;white-space:nowrap;letter-spacing:0.5px">キャンバス</div>
<div style="position:absolute;left:66px;top:606px;width:138px;height:20px;background:#f1f1f1"></div>
<svg style="position:absolute;left:46px;top:608px" width="12" height="16"><path d="M2 1.5l8 6.5-8 6.5z" fill="#fff" stroke="#222" stroke-width="1.3"/></svg>
<svg style="position:absolute;left:69px;top:610px" width="16" height="12"><path d="M1 6q6-7 14 0q-6 7-14 0z" fill="none" stroke="#8d8d8d" stroke-width="1.6"/><circle cx="8" cy="6" r="2.4" fill="#8d8d8d"/></svg>
<svg style="position:absolute;left:93px;top:609px" width="17" height="14"><path d="M0 1h6l2 2h9v11H0z" fill="#8f8f8f"/><path d="M0 4h17" stroke="#f1f1f1" stroke-width="0.8"/></svg>
<div style="position:absolute;left:124px;top:610px;font-family:'Liberation Sans',sans-serif;font-size:11px;color:#333;white-space:nowrap;letter-spacing:0.5px">コンストラクション</div>
<div style="position:absolute;left:66px;top:630px;width:106px;height:20px;background:#f1f1f1"></div>
<svg style="position:absolute;left:68px;top:631px" width="17" height="18"><path d="M1 16v-2h10l-1 3H2z" fill="#bbb"/><path d="M1 15V4l3-3h8v10l-2 4z" fill="#6ab0e6"/><path d="M1 4l3-3h8l-2 3z" fill="#8fcbf7"/><path d="M10 4l2-3v10l-2 4z" fill="#3f8dd0"/><path d="M15 15V2" stroke="#222" stroke-width="1.1"/><path d="M13.5 4l1.5-3 1.5 3z" fill="#222"/></svg>
<div style="position:absolute;left:99px;top:634px;font-family:'Liberation Sans',sans-serif;font-size:11px;color:#333;white-space:nowrap;letter-spacing:0.5px">押し出し3794</div>
<div style="position:absolute;left:66px;top:654px;width:106px;height:20px;background:#f1f1f1"></div>
<svg style="position:absolute;left:68px;top:655px" width="17" height="18"><path d="M1 16v-2h10l-1 3H2z" fill="#bbb"/><path d="M1 15V4l3-3h8v10l-2 4z" fill="#6ab0e6"/><path d="M1 4l3-3h8l-2 3z" fill="#8fcbf7"/><path d="M10 4l2-3v10l-2 4z" fill="#3f8dd0"/><path d="M15 15V2" stroke="#222" stroke-width="1.1"/><path d="M13.5 4l1.5-3 1.5 3z" fill="#222"/></svg>
<div style="position:absolute;left:99px;top:658px;font-family:'Liberation Sans',sans-serif;font-size:11px;color:#333;white-space:nowrap;letter-spacing:0.5px">押し出し3795</div>
<div style="position:absolute;left:66px;top:678px;width:106px;height:20px;background:#f1f1f1"></div>
<svg style="position:absolute;left:68px;top:679px" width="17" height="18"><path d="M1 16v-2h10l-1 3H2z" fill="#bbb"/><path d="M1 15V4l3-3h8v10l-2 4z" fill="#6ab0e6"/><path d="M1 4l3-3h8l-2 3z" fill="#8fcbf7"/><path d="M10 4l2-3v10l-2 4z" fill="#3f8dd0"/><path d="M15 15V2" stroke="#222" stroke-width="1.1"/><path d="M13.5 4l1.5-3 1.5 3z" fill="#222"/></svg>
<div style="position:absolute;left:99px;top:682px;font-family:'Liberation Sans',sans-serif;font-size:11px;color:#333;white-space:nowrap;letter-spacing:0.5px">押し出し3796</div>
<div style="position:absolute;left:66px;top:702px;width:106px;height:20px;background:#f1f1f1"></div>
<svg style="position:absolute;left:68px;top:703px" width="17" height="18"><path d="M1 16v-2h10l-1 3H2z" fill="#bbb"/><path d="M1 15V4l3-3h8v10l-2 4z" fill="#6ab0e6"/><path d="M1 4l3-3h8l-2 3z" fill="#8fcbf7"/><path d="M10 4l2-3v10l-2 4z" fill="#3f8dd0"/><path d="M15 15V2" stroke="#222" stroke-width="1.1"/><path d="M13.5 4l1.5-3 1.5 3z" fill="#222"/></svg>
<div style="position:absolute;left:99px;top:706px;font-family:'Liberation Sans',sans-serif;font-size:11px;color:#333;white-space:nowrap;letter-spacing:0.5px">押し出し3898</div>
<div style="position:absolute;left:66px;top:726px;width:102px;height:20px;background:#f1f1f1"></div>
<svg style="position:absolute;left:68px;top:727px" width="17" height="18"><path d="M1 16v-2h10l-1 3H2z" fill="#bbb"/><path d="M1 15V4l3-3h8v10l-2 4z" fill="#6ab0e6"/><path d="M1 4l3-3h8l-2 3z" fill="#8fcbf7"/><path d="M10 4l2-3v10l-2 4z" fill="#3f8dd0"/><path d="M15 15V2" stroke="#222" stroke-width="1.1"/><path d="M13.5 4l1.5-3 1.5 3z" fill="#222"/></svg>
<div style="position:absolute;left:99px;top:730px;font-family:'Liberation Sans',sans-serif;font-size:11px;color:#333;white-space:nowrap;letter-spacing:0.5px">押し出し3901</div>
<div style="position:absolute;left:66px;top:750px;width:106px;height:20px;background:#f1f1f1"></div>
<svg style="position:absolute;left:68px;top:751px" width="17" height="18"><path d="M1 16v-2h10l-1 3H2z" fill="#bbb"/><path d="M1 15V4l3-3h8v10l-2 4z" fill="#6ab0e6"/><path d="M1 4l3-3h8l-2 3z" fill="#8fcbf7"/><path d="M10 4l2-3v10l-2 4z" fill="#3f8dd0"/><path d="M15 15V2" stroke="#222" stroke-width="1.1"/><path d="M13.5 4l1.5-3 1.5 3z" fill="#222"/></svg>
<div style="position:absolute;left:99px;top:754px;font-family:'Liberation Sans',sans-serif;font-size:11px;color:#333;white-space:nowrap;letter-spacing:0.5px">押し出し3903</div>
<div style="position:absolute;left:66px;top:774px;width:90px;height:20px;background:#f1f1f1"></div>
<svg style="position:absolute;left:68px;top:775px" width="17" height="18"><path d="M1 16V7l4-5h3l-3 14z" fill="#ddd" stroke="#444" stroke-width="1"/><path d="M7 10l4-7 4 7-4 5z" fill="#4f9fe0"/><path d="M12 1l3 6" stroke="#222" stroke-width="1"/></svg>
<div style="position:absolute;left:99px;top:778px;font-family:'Liberation Sans',sans-serif;font-size:11px;color:#333;white-space:nowrap;letter-spacing:0.5px">勾配3920</div>
<div style="position:absolute;left:66px;top:798px;width:86px;height:20px;background:#f1f1f1"></div>
<svg style="position:absolute;left:68px;top:799px" width="17" height="18"><path d="M1 16V7l4-5h3l-3 14z" fill="#ddd" stroke="#444" stroke-width="1"/><path d="M7 10l4-7 4 7-4 5z" fill="#4f9fe0"/><path d="M12 1l3 6" stroke="#222" stroke-width="1"/></svg>
<div style="position:absolute;left:99px;top:802px;font-family:'Liberation Sans',sans-serif;font-size:11px;color:#333;white-space:nowrap;letter-spacing:0.5px">勾配3921</div>
<div style="position:absolute;left:66px;top:822px;width:106px;height:20px;background:#f1f1f1"></div>
<svg style="position:absolute;left:68px;top:823px" width="17" height="18"><path d="M1 16v-2h10l-1 3H2z" fill="#bbb"/><path d="M1 15V4l3-3h8v10l-2 4z" fill="#6ab0e6"/><path d="M1 4l3-3h8l-2 3z" fill="#8fcbf7"/><path d="M10 4l2-3v10l-2 4z" fill="#3f8dd0"/><path d="M15 15V2" stroke="#222" stroke-width="1.1"/><path d="M13.5 4l1.5-3 1.5 3z" fill="#222"/></svg>
<div style="position:absolute;left:99px;top:826px;font-family:'Liberation Sans',sans-serif;font-size:11px;color:#333;white-space:nowrap;letter-spacing:0.5px">押し出し3935</div>
<div style="position:absolute;left:66px;top:846px;width:106px;height:20px;background:#f1f1f1"></div>
<svg style="position:absolute;left:68px;top:847px" width="17" height="18"><path d="M1 16v-2h10l-1 3H2z" fill="#bbb"/><path d="M1 15V4l3-3h8v10l-2 4z" fill="#6ab0e6"/><path d="M1 4l3-3h8l-2 3z" fill="#8fcbf7"/><path d="M10 4l2-3v10l-2 4z" fill="#3f8dd0"/><path d="M15 15V2" stroke="#222" stroke-width="1.1"/><path d="M13.5 4l1.5-3 1.5 3z" fill="#222"/></svg>
<div style="position:absolute;left:99px;top:850px;font-family:'Liberation Sans',sans-serif;font-size:11px;color:#333;white-space:nowrap;letter-spacing:0.5px">押し出し3936</div>
<div style="position:absolute;left:66px;top:870px;width:106px;height:20px;background:#f1f1f1"></div>
<svg style="position:absolute;left:68px;top:871px" width="17" height="18"><path d="M1 16v-2h10l-1 3H2z" fill="#bbb"/><path d="M1 15V4l3-3h8v10l-2 4z" fill="#6ab0e6"/><path d="M1 4l3-3h8l-2 3z" fill="#8fcbf7"/><path d="M10 4l2-3v10l-2 4z" fill="#3f8dd0"/><path d="M15 15V2" stroke="#222" stroke-width="1.1"/><path d="M13.5 4l1.5-3 1.5 3z" fill="#222"/></svg>
<div style="position:absolute;left:99px;top:874px;font-family:'Liberation Sans',sans-serif;font-size:11px;color:#333;white-space:nowrap;letter-spacing:0.5px">押し出し3937</div>
<div style="position:absolute;left:66px;top:894px;width:106px;height:20px;background:#f1f1f1"></div>
<svg style="position:absolute;left:68px;top:895px" width="17" height="18"><path d="M1 16v-2h10l-1 3H2z" fill="#bbb"/><path d="M1 15V4l3-3h8v10l-2 4z" fill="#6ab0e6"/><path d="M1 4l3-3h8l-2 3z" fill="#8fcbf7"/><path d="M10 4l2-3v10l-2 4z" fill="#3f8dd0"/><path d="M15 15V2" stroke="#222" stroke-width="1.1"/><path d="M13.5 4l1.5-3 1.5 3z" fill="#222"/></svg>
<div style="position:absolute;left:99px;top:898px;font-family:'Liberation Sans',sans-serif;font-size:11px;color:#333;white-space:nowrap;letter-spacing:0.5px">押し出し3938</div>
<div style="position:absolute;left:66px;top:918px;width:106px;height:20px;background:#f1f1f1"></div>
<svg style="position:absolute;left:68px;top:919px" width="17" height="18"><path d="M1 16v-2h10l-1 3H2z" fill="#bbb"/><path d="M1 15V4l3-3h8v10l-2 4z" fill="#6ab0e6"/><path d="M1 4l3-3h8l-2 3z" fill="#8fcbf7"/><path d="M10 4l2-3v10l-2 4z" fill="#3f8dd0"/><path d="M15 15V2" stroke="#222" stroke-width="1.1"/><path d="M13.5 4l1.5-3 1.5 3z" fill="#222"/></svg>
<div style="position:absolute;left:99px;top:922px;font-family:'Liberation Sans',sans-serif;font-size:11px;color:#333;white-space:nowrap;letter-spacing:0.5px">押し出し3939</div>
<div style="position:absolute;left:66px;top:942px;width:106px;height:20px;background:#f1f1f1"></div>
<svg style="position:absolute;left:68px;top:943px" width="17" height="18"><path d="M1 16v-2h10l-1 3H2z" fill="#bbb"/><path d="M1 15V4l3-3h8v10l-2 4z" fill="#6ab0e6"/><path d="M1 4l3-3h8l-2 3z" fill="#8fcbf7"/><path d="M10 4l2-3v10l-2 4z" fill="#3f8dd0"/><path d="M15 15V2" stroke="#222" stroke-width="1.1"/><path d="M13.5 4l1.5-3 1.5 3z" fill="#222"/></svg>
<div style="position:absolute;left:99px;top:946px;font-family:'Liberation Sans',sans-serif;font-size:11px;color:#333;white-space:nowrap;letter-spacing:0.5px">押し出し3940</div>
<div style="position:absolute;left:66px;top:966px;width:102px;height:20px;background:#f1f1f1"></div>
<svg style="position:absolute;left:68px;top:967px" width="17" height="18"><path d="M1 16v-2h10l-1 3H2z" fill="#bbb"/><path d="M1 15V4l3-3h8v10l-2 4z" fill="#6ab0e6"/><path d="M1 4l3-3h8l-2 3z" fill="#8fcbf7"/><path d="M10 4l2-3v10l-2 4z" fill="#3f8dd0"/><path d="M15 15V2" stroke="#222" stroke-width="1.1"/><path d="M13.5 4l1.5-3 1.5 3z" fill="#222"/></svg>
<div style="position:absolute;left:99px;top:970px;font-family:'Liberation Sans',sans-serif;font-size:11px;color:#333;white-space:nowrap;letter-spacing:0.5px">押し出し3941</div>
<div style="position:absolute;left:66px;top:990px;width:106px;height:20px;background:#f1f1f1"></div>
<svg style="position:absolute;left:68px;top:991px" width="17" height="18"><path d="M1 16v-2h10l-1 3H2z" fill="#bbb"/><path d="M1 15V4l3-3h8v10l-2 4z" fill="#6ab0e6"/><path d="M1 4l3-3h8l-2 3z" fill="#8fcbf7"/><path d="M10 4l2-3v10l-2 4z" fill="#3f8dd0"/><path d="M15 15V2" stroke="#222" stroke-width="1.1"/><path d="M13.5 4l1.5-3 1.5 3z" fill="#222"/></svg>
<div style="position:absolute;left:99px;top:994px;font-family:'Liberation Sans',sans-serif;font-size:11px;color:#333;white-space:nowrap;letter-spacing:0.5px">押し出し3945</div>
<div style="position:absolute;left:66px;top:1014px;width:90px;height:20px;background:#f1f1f1"></div>
<svg style="position:absolute;left:68px;top:1015px" width="17" height="18"><path d="M1 16V7l4-5h3l-3 14z" fill="#ddd" stroke="#444" stroke-width="1"/><path d="M7 10l4-7 4 7-4 5z" fill="#4f9fe0"/><path d="M12 1l3 6" stroke="#222" stroke-width="1"/></svg>
<div style="position:absolute;left:99px;top:1018px;font-family:'Liberation Sans',sans-serif;font-size:11px;color:#333;white-space:nowrap;letter-spacing:0.5px">勾配3946</div>
<div style="position:absolute;left:66px;top:1038px;width:106px;height:20px;background:#f1f1f1"></div>
<svg style="position:absolute;left:68px;top:1039px" width="17" height="18"><path d="M1 16V5l4-4h3q7 1 8 8v5l-2 2z" fill="#ddd" stroke="#444" stroke-width="1"/><path d="M7 1q8 1 9 9l-3 2q-1-7-8-9z" fill="#4f9fe0"/></svg>
<div style="position:absolute;left:99px;top:1042px;font-family:'Liberation Sans',sans-serif;font-size:11px;color:#333;white-space:nowrap;letter-spacing:0.5px">フィレット3959</div>
<div style="position:absolute;left:66px;top:1062px;width:106px;height:20px;background:#f1f1f1"></div>
<svg style="position:absolute;left:68px;top:1063px" width="17" height="18"><path d="M1 16V5l4-4h3q7 1 8 8v5l-2 2z" fill="#ddd" stroke="#444" stroke-width="1"/><path d="M7 1q8 1 9 9l-3 2q-1-7-8-9z" fill="#4f9fe0"/></svg>
<div style="position:absolute;left:99px;top:1066px;font-family:'Liberation Sans',sans-serif;font-size:11px;color:#333;white-space:nowrap;letter-spacing:0.5px">フィレット3960</div>
<div style="position:absolute;left:66px;top:1086px;width:102px;height:20px;background:#f1f1f1"></div>
<svg style="position:absolute;left:68px;top:1087px" width="17" height="18"><path d="M1 16V5l4-4h3q7 1 8 8v5l-2 2z" fill="#ddd" stroke="#444" stroke-width="1"/><path d="M7 1q8 1 9 9l-3 2q-1-7-8-9z" fill="#4f9fe0"/></svg>
<div style="position:absolute;left:99px;top:1090px;font-family:'Liberation Sans',sans-serif;font-size:11px;color:#333;white-space:nowrap;letter-spacing:0.5px">フィレット3961</div>
<div style="position:absolute;left:12px;top:1131px;width:300px;height:24px;background:#f1f1f1;border:1px solid #cfcfcf;box-sizing:border-box"></div>
<div style="position:absolute;left:37px;top:1137px;font-family:'Liberation Sans',sans-serif;font-size:11px;color:#555;letter-spacing:1px;white-space:nowrap">コメント</div>
<svg style="position:absolute;left:290px;top:1138px" width="10" height="10"><circle cx="5" cy="5" r="5" fill="#222"/><path d="M2 5h6M5 2v6" stroke="#fff" stroke-width="1.5"/></svg>
<div style="position:absolute;left:850px;top:1130px;width:237px;height:24px;background:rgba(241,241,241,0.95)"></div>
<svg style="position:absolute;left:852px;top:1133px" width="22" height="18"><path d="M9 2v15" stroke="#333" stroke-width="2.2"/><path d="M9 1l-3 4h6z" fill="#333"/><ellipse cx="9" cy="11" rx="7" ry="2.8" fill="none" stroke="#333" stroke-width="1.3"/><path d="M2 11l3 2.5-1 2z" fill="#333"/></svg>
<svg style="position:absolute;left:874px;top:1140px" width="7" height="5"><path d="M0 0h6.5l-3.2 4z" fill="#333"/></svg>
<svg style="position:absolute;left:885px;top:1133px" width="22" height="18"><rect x="1.5" y="5.5" width="15" height="11" fill="#fff" stroke="#444" stroke-width="1.2"/><rect x="4.5" y="9" width="9" height="4" fill="#b8c4d0" stroke="#555" stroke-width="0.8"/><path d="M3 5l2-3 3 2 3-2 3 2" fill="none" stroke="#444" stroke-width="1"/></svg>
<svg style="position:absolute;left:910px;top:1133px" width="22" height="18"><path d="M5 16q-4-4-3-7 1-1 3 1V3q0-1 1-1t1 1v6V1.5q0-1 1-1t1 1V9V2q0-1 1-1t1 1v7V4q0-1 1-1t1 1v8q0 4-4 5z" fill="#fff" stroke="#333" stroke-width="1"/></svg>
<svg style="position:absolute;left:936px;top:1133px" width="22" height="18"><circle cx="7" cy="8" r="5" fill="#dfeef0" stroke="#444" stroke-width="1.3"/><path d="M10.5 11.5l4 4" stroke="#333" stroke-width="2.2"/><path d="M15 1v6M12 4h6M12 8h6" stroke="#333" stroke-width="1"/></svg>
<svg style="position:absolute;left:962px;top:1133px" width="22" height="18"><rect x="0.5" y="0.5" width="16" height="16" fill="none" stroke="#555" stroke-dasharray="2 1.5"/><circle cx="7" cy="7" r="5.5" fill="#dfeef0" stroke="#444" stroke-width="1.3"/><path d="M11 11l4.5 4.5" stroke="#333" stroke-width="2.2"/></svg>
<svg style="position:absolute;left:986px;top:1140px" width="7" height="5"><path d="M0 0h6.5l-3.2 4z" fill="#333"/></svg>
<svg style="position:absolute;left:996px;top:1133px" width="22" height="18"><rect x="1" y="1.5" width="15" height="11" rx="1" fill="#8db0d8" stroke="#444" stroke-width="1.3"/><path d="M6 15.5h5M8.5 12.5v3" stroke="#444" stroke-width="1.3"/></svg>
<svg style="position:absolute;left:1014px;top:1140px" width="7" height="5"><path d="M0 0h6.5l-3.2 4z" fill="#333"/></svg>
<svg style="position:absolute;left:1028px;top:1133px" width="22" height="18"><rect x="1" y="1" width="15" height="15" fill="#8a8a8a"/><path d="M1 4.5h15M1 8h15M1 11.5h15M4.5 1v15M8 1v15M11.5 1v15" stroke="#f0f0f0" stroke-width="0.9"/></svg>
<svg style="position:absolute;left:1046px;top:1140px" width="7" height="5"><path d="M0 0h6.5l-3.2 4z" fill="#333"/></svg>
<svg style="position:absolute;left:1058px;top:1133px" width="22" height="18"><rect x="1" y="2" width="7" height="6" fill="#8db0d8" stroke="#3a5fa0"/><rect x="9.5" y="2" width="7" height="6" fill="#8db0d8" stroke="#3a5fa0"/><rect x="1" y="9.5" width="7" height="6" fill="#8db0d8" stroke="#3a5fa0"/><rect x="9.5" y="9.5" width="7" height="6" fill="#8db0d8" stroke="#3a5fa0"/></svg>
<svg style="position:absolute;left:1077px;top:1140px" width="7" height="5"><path d="M0 0h6.5l-3.2 4z" fill="#333"/></svg>

<div style="position:absolute;left:8px;top:1160px;width:1920px;height:8px;background:#111"></div>
<div style="position:absolute;left:57px;top:1160px;width:287px;height:8px;background:#f3f3f3"></div>
<div style="position:absolute;left:287px;top:1162px;width:12px;height:6px;background:#c8a040;border-radius:6px 6px 0 0"></div>
<div style="position:absolute;left:786px;top:1160px;width:49px;height:8px;background:#3a3a3a"></div>
<div style="position:absolute;left:1838px;top:1164px;width:14px;height:4px;background:#777"></div>

</body></html>
